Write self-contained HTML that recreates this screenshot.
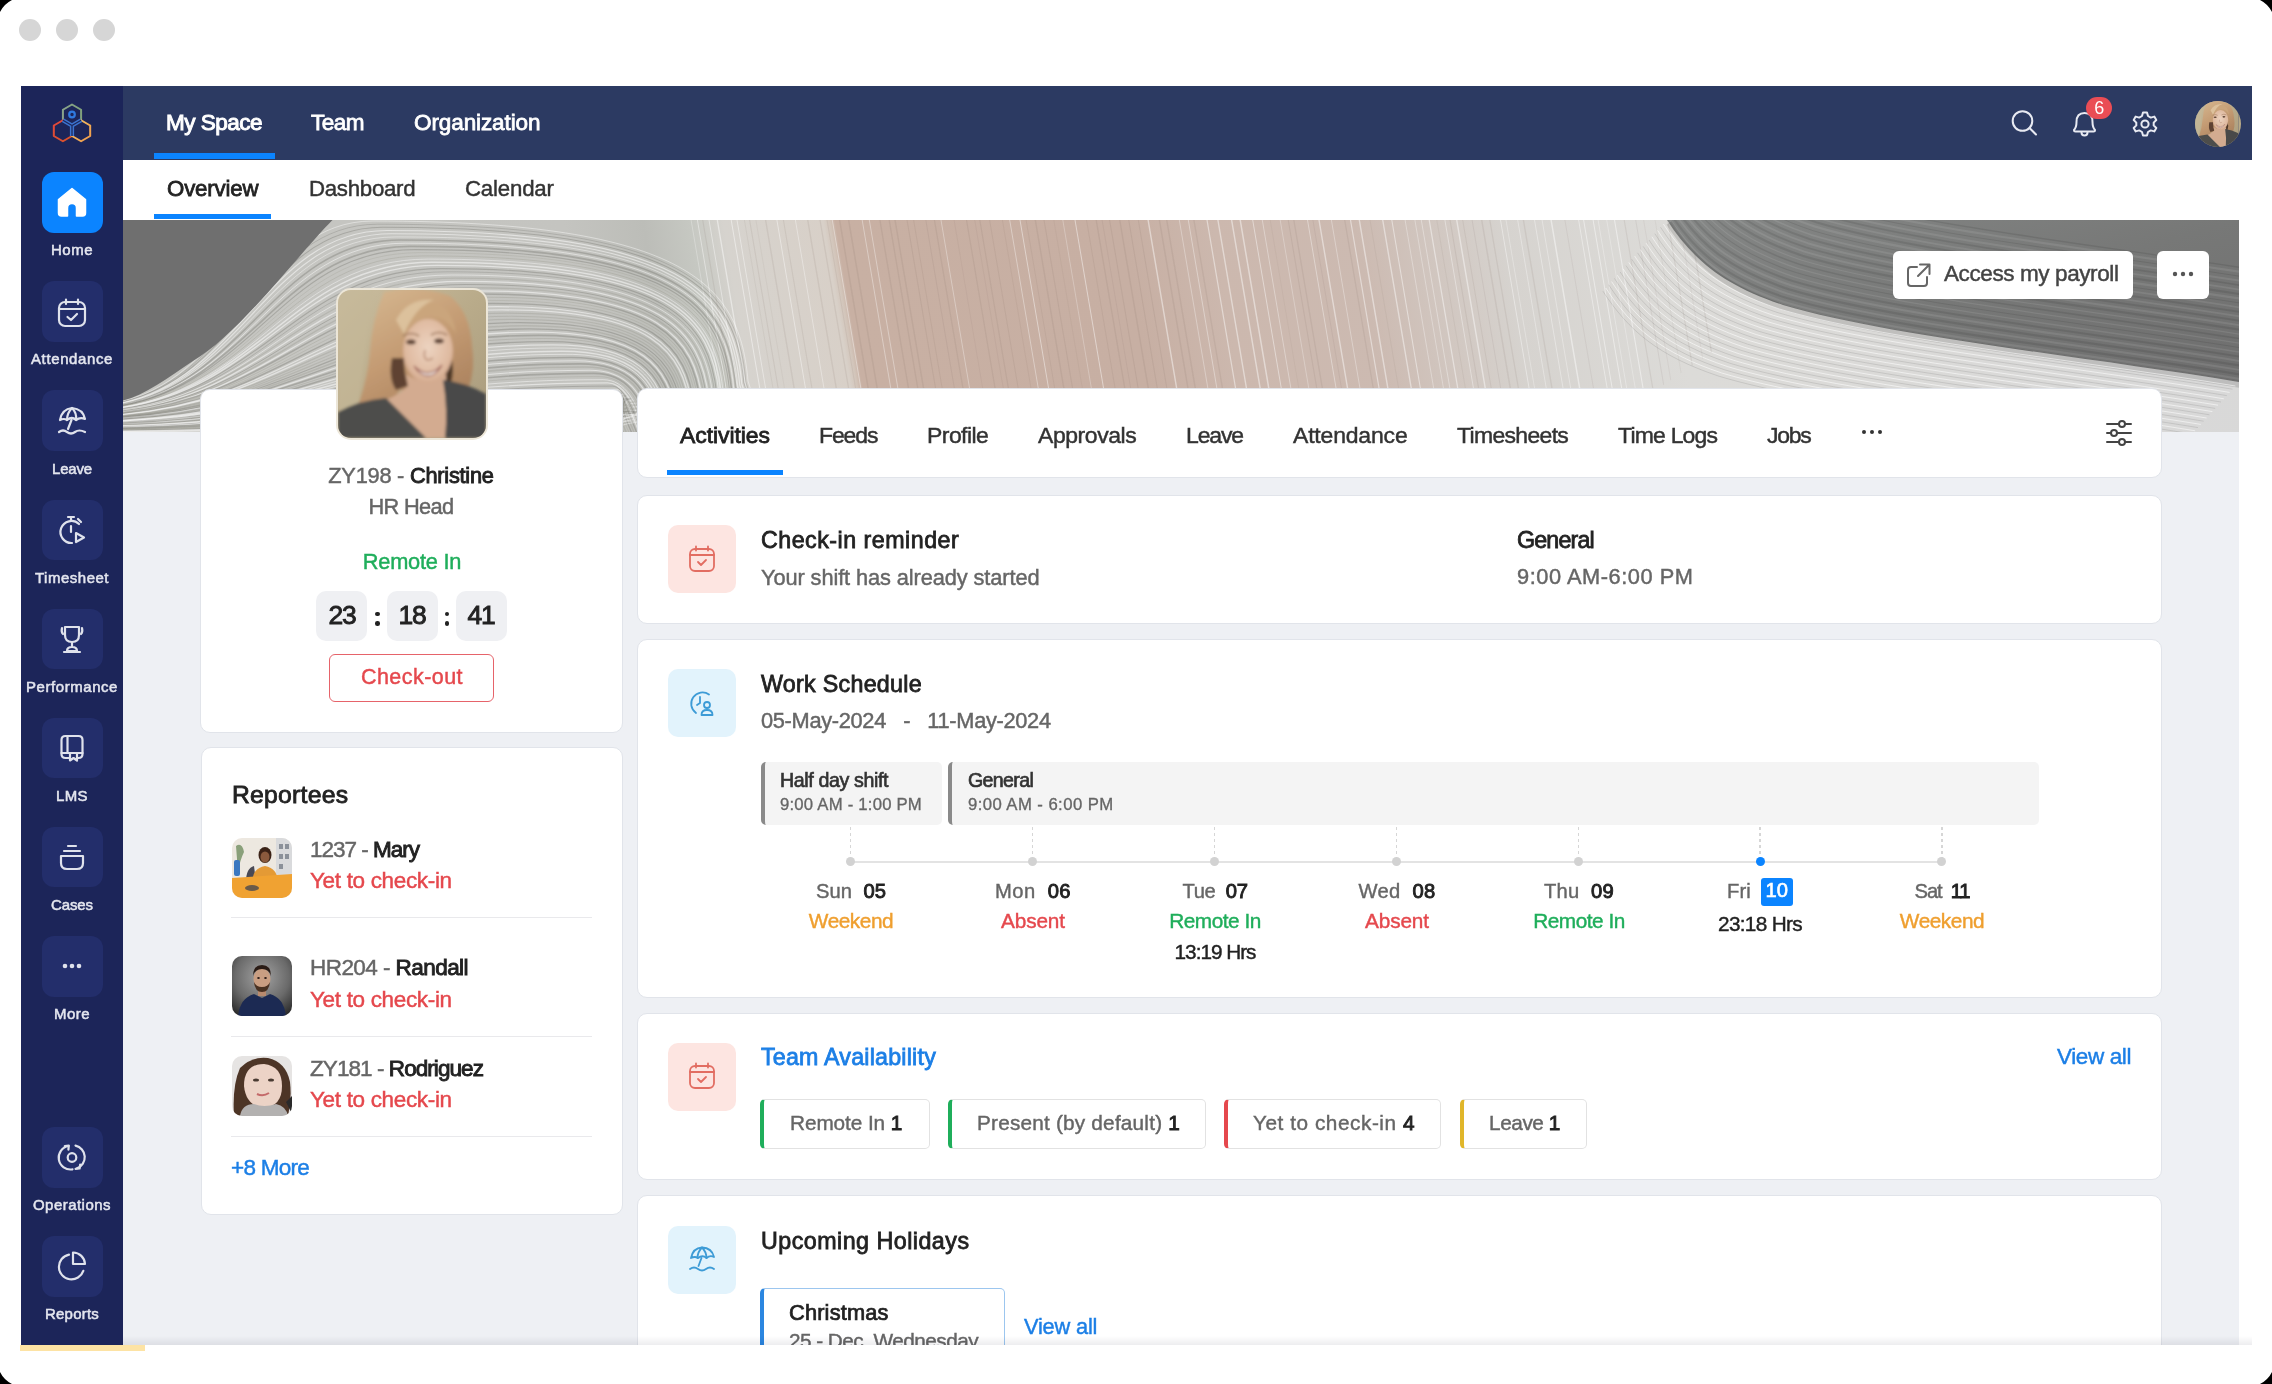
<!DOCTYPE html><html><head><meta charset="utf-8"><style>
html,body{margin:0;padding:0;}
body{width:2272px;height:1384px;overflow:hidden;background:#000;font-family:"Liberation Sans", sans-serif;}
.win{position:absolute;left:0;top:0;width:2272px;height:1384px;background:#fff;overflow:hidden;}
.t{position:absolute;white-space:nowrap;line-height:1;will-change:transform;}
.t b{font-weight:400;-webkit-text-stroke:0.9px #222;}
.card{position:absolute;background:#fff;border:1px solid #e1e4ea;border-radius:10px;box-sizing:border-box;}
</style></head><body><div class="win">
<div style="position:absolute;left:19px;top:19px;width:22px;height:22px;background:#d6d6d6;border-radius:50%;"></div>
<div style="position:absolute;left:56px;top:19px;width:22px;height:22px;background:#d6d6d6;border-radius:50%;"></div>
<div style="position:absolute;left:93px;top:19px;width:22px;height:22px;background:#d6d6d6;border-radius:50%;"></div>
<div style="position:absolute;left:21px;top:86px;width:102px;height:1259px;background:#1c2559;"></div>
<div style="position:absolute;left:123px;top:86px;width:2129px;height:73.5px;background:#2c3a62;"></div>
<div style="position:absolute;left:154px;top:153.2px;width:120.5px;height:6px;background:#0b84ff;"></div>
<div style="position:absolute;left:123px;top:159.5px;width:2116px;height:61px;background:#fff;"></div>
<div style="position:absolute;left:154px;top:214.2px;width:117px;height:4.8px;background:#0b84ff;"></div>
<div style="position:absolute;left:123px;top:432px;width:2116px;height:913px;background:#eef0f4;"></div>
<svg style="position:absolute;left:123px;top:220px;" width="2116" height="212" viewBox="0 0 2116 212">
    <defs>
      <linearGradient id="bg1" gradientUnits="userSpaceOnUse" x1="0" y1="0" x2="2116" y2="-349"><stop offset="0.0000" stop-color="#c6c6c2"/><stop offset="0.2024" stop-color="#c4c4c0"/><stop offset="0.2392" stop-color="#bcbdb8"/><stop offset="0.2609" stop-color="#c6c8c2"/><stop offset="0.2760" stop-color="#d6d3ce"/><stop offset="0.3221" stop-color="#d8d0c8"/><stop offset="0.3253" stop-color="#d2c4b9"/><stop offset="0.3276" stop-color="#c8b0a3"/><stop offset="0.4601" stop-color="#c7afa3"/><stop offset="0.5015" stop-color="#ccb8ae"/><stop offset="0.5664" stop-color="#ccbab1"/><stop offset="0.6349" stop-color="#d6d3cf"/><stop offset="0.7085" stop-color="#dcdbd8"/><stop offset="0.9735" stop-color="#d8d8d8"/></linearGradient>
      <linearGradient id="dk" x1="0" y1="0" x2="1" y2="1">
        <stop offset="0" stop-color="#858786"/><stop offset="0.5" stop-color="#777877"/><stop offset="1" stop-color="#6e6e6e"/>
      </linearGradient>
      <clipPath id="bclip"><rect width="2116" height="212"/></clipPath>
      <clipPath id="slclip"><path d="M560 0 H1544 C1570 40 1600 65 1660 85 L1470 212 H600 Z"/></clipPath>
    </defs>
    <g clip-path="url(#bclip)">
    <rect width="2116" height="212" fill="url(#bg1)"/>
    <g clip-path="url(#slclip)"><path d="M568.1 0 L604.1 212" stroke="rgba(255,255,255,0.45)" stroke-width="0.60" fill="none"/><path d="M574.4 0 L610.4 212" stroke="rgba(255,255,255,0.45)" stroke-width="0.93" fill="none"/><path d="M579.7 0 L615.7 212" stroke="rgba(110,90,80,0.10)" stroke-width="1.15" fill="none"/><path d="M586.0 0 L622.0 212" stroke="rgba(255,255,255,0.45)" stroke-width="0.91" fill="none"/><path d="M594.3 0 L630.3 212" stroke="rgba(255,255,255,0.45)" stroke-width="1.36" fill="none"/><path d="M608.2 0 L644.2 212" stroke="rgba(255,255,255,0.45)" stroke-width="1.04" fill="none"/><path d="M614.0 0 L650.0 212" stroke="rgba(255,255,255,0.45)" stroke-width="0.91" fill="none"/><path d="M621.4 0 L657.4 212" stroke="rgba(110,90,80,0.10)" stroke-width="0.75" fill="none"/><path d="M626.6 0 L662.6 212" stroke="rgba(110,90,80,0.10)" stroke-width="1.08" fill="none"/><path d="M632.9 0 L668.9 212" stroke="rgba(110,90,80,0.10)" stroke-width="0.62" fill="none"/><path d="M642.6 0 L678.6 212" stroke="rgba(110,90,80,0.10)" stroke-width="1.38" fill="none"/><path d="M653.9 0 L689.9 212" stroke="rgba(255,255,255,0.45)" stroke-width="0.93" fill="none"/><path d="M660.4 0 L696.4 212" stroke="rgba(110,90,80,0.10)" stroke-width="1.08" fill="none"/><path d="M672.4 0 L708.4 212" stroke="rgba(255,255,255,0.45)" stroke-width="0.80" fill="none"/><path d="M684.7 0 L720.7 212" stroke="rgba(110,90,80,0.10)" stroke-width="1.37" fill="none"/><path d="M697.0 0 L733.0 212" stroke="rgba(110,90,80,0.10)" stroke-width="1.27" fill="none"/><path d="M704.0 0 L740.0 212" stroke="rgba(110,90,80,0.10)" stroke-width="0.92" fill="none"/><path d="M709.3 0 L745.3 212" stroke="rgba(255,255,255,0.45)" stroke-width="0.85" fill="none"/><path d="M716.6 0 L752.6 212" stroke="rgba(110,90,80,0.10)" stroke-width="1.46" fill="none"/><path d="M725.6 0 L761.6 212" stroke="rgba(110,90,80,0.10)" stroke-width="1.49" fill="none"/><path d="M739.2 0 L775.2 212" stroke="rgba(255,255,255,0.45)" stroke-width="0.80" fill="none"/><path d="M746.3 0 L782.3 212" stroke="rgba(255,255,255,0.45)" stroke-width="0.78" fill="none"/><path d="M756.9 0 L792.9 212" stroke="rgba(110,90,80,0.10)" stroke-width="1.36" fill="none"/><path d="M766.2 0 L802.2 212" stroke="rgba(110,90,80,0.10)" stroke-width="1.32" fill="none"/><path d="M772.0 0 L808.0 212" stroke="rgba(110,90,80,0.10)" stroke-width="1.42" fill="none"/><path d="M784.0 0 L820.0 212" stroke="rgba(110,90,80,0.10)" stroke-width="1.03" fill="none"/><path d="M790.6 0 L826.6 212" stroke="rgba(110,90,80,0.10)" stroke-width="0.90" fill="none"/><path d="M802.8 0 L838.8 212" stroke="rgba(110,90,80,0.10)" stroke-width="0.96" fill="none"/><path d="M811.4 0 L847.4 212" stroke="rgba(110,90,80,0.10)" stroke-width="1.25" fill="none"/><path d="M818.0 0 L854.0 212" stroke="rgba(255,255,255,0.45)" stroke-width="0.74" fill="none"/><path d="M831.1 0 L867.1 212" stroke="rgba(110,90,80,0.10)" stroke-width="0.73" fill="none"/><path d="M843.5 0 L879.5 212" stroke="rgba(110,90,80,0.10)" stroke-width="1.19" fill="none"/><path d="M851.7 0 L887.7 212" stroke="rgba(110,90,80,0.10)" stroke-width="0.72" fill="none"/><path d="M856.8 0 L892.8 212" stroke="rgba(110,90,80,0.10)" stroke-width="1.18" fill="none"/><path d="M866.6 0 L902.6 212" stroke="rgba(110,90,80,0.10)" stroke-width="0.99" fill="none"/><path d="M879.4 0 L915.4 212" stroke="rgba(110,90,80,0.10)" stroke-width="0.79" fill="none"/><path d="M886.7 0 L922.7 212" stroke="rgba(255,255,255,0.45)" stroke-width="0.82" fill="none"/><path d="M897.0 0 L933.0 212" stroke="rgba(255,255,255,0.45)" stroke-width="0.98" fill="none"/><path d="M903.1 0 L939.1 212" stroke="rgba(110,90,80,0.10)" stroke-width="0.92" fill="none"/><path d="M912.3 0 L948.3 212" stroke="rgba(110,90,80,0.10)" stroke-width="1.41" fill="none"/><path d="M921.0 0 L957.0 212" stroke="rgba(110,90,80,0.10)" stroke-width="1.05" fill="none"/><path d="M930.8 0 L966.8 212" stroke="rgba(110,90,80,0.10)" stroke-width="0.62" fill="none"/><path d="M939.8 0 L975.8 212" stroke="rgba(255,255,255,0.45)" stroke-width="0.60" fill="none"/><path d="M952.0 0 L988.0 212" stroke="rgba(255,255,255,0.45)" stroke-width="1.03" fill="none"/><path d="M963.5 0 L999.5 212" stroke="rgba(110,90,80,0.10)" stroke-width="0.89" fill="none"/><path d="M973.2 0 L1009.2 212" stroke="rgba(110,90,80,0.10)" stroke-width="1.31" fill="none"/><path d="M979.1 0 L1015.1 212" stroke="rgba(110,90,80,0.10)" stroke-width="0.82" fill="none"/><path d="M986.6 0 L1022.6 212" stroke="rgba(110,90,80,0.10)" stroke-width="1.06" fill="none"/><path d="M996.7 0 L1032.7 212" stroke="rgba(110,90,80,0.10)" stroke-width="1.42" fill="none"/><path d="M1005.7 0 L1041.7 212" stroke="rgba(110,90,80,0.10)" stroke-width="1.05" fill="none"/><path d="M1015.3 0 L1051.3 212" stroke="rgba(110,90,80,0.10)" stroke-width="1.01" fill="none"/><path d="M1025.1 0 L1061.1 212" stroke="rgba(255,255,255,0.45)" stroke-width="1.45" fill="none"/><path d="M1036.4 0 L1072.4 212" stroke="rgba(110,90,80,0.10)" stroke-width="1.45" fill="none"/><path d="M1043.7 0 L1079.7 212" stroke="rgba(110,90,80,0.10)" stroke-width="1.45" fill="none"/><path d="M1056.3 0 L1092.3 212" stroke="rgba(255,255,255,0.45)" stroke-width="0.71" fill="none"/><path d="M1065.3 0 L1101.3 212" stroke="rgba(255,255,255,0.45)" stroke-width="0.82" fill="none"/><path d="M1070.9 0 L1106.9 212" stroke="rgba(110,90,80,0.10)" stroke-width="1.31" fill="none"/><path d="M1084.0 0 L1120.0 212" stroke="rgba(255,255,255,0.45)" stroke-width="1.24" fill="none"/><path d="M1094.9 0 L1130.9 212" stroke="rgba(255,255,255,0.45)" stroke-width="1.39" fill="none"/><path d="M1108.6 0 L1144.6 212" stroke="rgba(255,255,255,0.45)" stroke-width="1.46" fill="none"/><path d="M1117.2 0 L1153.2 212" stroke="rgba(255,255,255,0.45)" stroke-width="1.49" fill="none"/><path d="M1129.7 0 L1165.7 212" stroke="rgba(255,255,255,0.45)" stroke-width="0.99" fill="none"/><path d="M1139.3 0 L1175.3 212" stroke="rgba(255,255,255,0.45)" stroke-width="0.78" fill="none"/><path d="M1147.2 0 L1183.2 212" stroke="rgba(110,90,80,0.10)" stroke-width="0.62" fill="none"/><path d="M1157.2 0 L1193.2 212" stroke="rgba(255,255,255,0.45)" stroke-width="0.62" fill="none"/><path d="M1165.2 0 L1201.2 212" stroke="rgba(110,90,80,0.10)" stroke-width="1.06" fill="none"/><path d="M1170.8 0 L1206.8 212" stroke="rgba(110,90,80,0.10)" stroke-width="1.31" fill="none"/><path d="M1184.5 0 L1220.5 212" stroke="rgba(255,255,255,0.45)" stroke-width="0.84" fill="none"/><path d="M1189.9 0 L1225.9 212" stroke="rgba(110,90,80,0.10)" stroke-width="0.84" fill="none"/><path d="M1196.0 0 L1232.0 212" stroke="rgba(255,255,255,0.45)" stroke-width="1.42" fill="none"/><path d="M1208.4 0 L1244.4 212" stroke="rgba(255,255,255,0.45)" stroke-width="0.73" fill="none"/><path d="M1221.7 0 L1257.7 212" stroke="rgba(110,90,80,0.10)" stroke-width="1.23" fill="none"/><path d="M1227.5 0 L1263.5 212" stroke="rgba(255,255,255,0.45)" stroke-width="1.22" fill="none"/><path d="M1236.3 0 L1272.3 212" stroke="rgba(255,255,255,0.45)" stroke-width="1.44" fill="none"/><path d="M1247.0 0 L1283.0 212" stroke="rgba(110,90,80,0.10)" stroke-width="0.68" fill="none"/><path d="M1259.7 0 L1295.7 212" stroke="rgba(255,255,255,0.45)" stroke-width="1.38" fill="none"/><path d="M1268.8 0 L1304.8 212" stroke="rgba(255,255,255,0.45)" stroke-width="1.10" fill="none"/><path d="M1282.1 0 L1318.1 212" stroke="rgba(255,255,255,0.45)" stroke-width="0.72" fill="none"/><path d="M1291.9 0 L1327.9 212" stroke="rgba(255,255,255,0.45)" stroke-width="0.70" fill="none"/><path d="M1298.3 0 L1334.3 212" stroke="rgba(255,255,255,0.45)" stroke-width="0.78" fill="none"/><path d="M1306.2 0 L1342.2 212" stroke="rgba(255,255,255,0.45)" stroke-width="1.28" fill="none"/><path d="M1313.8 0 L1349.8 212" stroke="rgba(110,90,80,0.10)" stroke-width="0.76" fill="none"/><path d="M1321.9 0 L1357.9 212" stroke="rgba(255,255,255,0.45)" stroke-width="0.83" fill="none"/><path d="M1327.0 0 L1363.0 212" stroke="rgba(110,90,80,0.10)" stroke-width="1.10" fill="none"/><path d="M1333.7 0 L1369.7 212" stroke="rgba(255,255,255,0.45)" stroke-width="1.44" fill="none"/><path d="M1339.7 0 L1375.7 212" stroke="rgba(110,90,80,0.10)" stroke-width="0.99" fill="none"/><path d="M1349.1 0 L1385.1 212" stroke="rgba(110,90,80,0.10)" stroke-width="0.95" fill="none"/><path d="M1358.7 0 L1394.7 212" stroke="rgba(110,90,80,0.10)" stroke-width="1.48" fill="none"/><path d="M1366.8 0 L1402.8 212" stroke="rgba(110,90,80,0.10)" stroke-width="1.24" fill="none"/><path d="M1377.5 0 L1413.5 212" stroke="rgba(255,255,255,0.45)" stroke-width="0.91" fill="none"/><path d="M1383.0 0 L1419.0 212" stroke="rgba(255,255,255,0.45)" stroke-width="0.66" fill="none"/><path d="M1394.7 0 L1430.7 212" stroke="rgba(255,255,255,0.45)" stroke-width="0.75" fill="none"/><path d="M1400.4 0 L1436.4 212" stroke="rgba(110,90,80,0.10)" stroke-width="1.38" fill="none"/><path d="M1411.5 0 L1447.5 212" stroke="rgba(255,255,255,0.45)" stroke-width="0.82" fill="none"/><path d="M1419.1 0 L1455.1 212" stroke="rgba(255,255,255,0.45)" stroke-width="0.74" fill="none"/><path d="M1428.1 0 L1464.1 212" stroke="rgba(255,255,255,0.45)" stroke-width="1.47" fill="none"/><path d="M1441.9 0 L1477.9 212" stroke="rgba(110,90,80,0.10)" stroke-width="0.82" fill="none"/><path d="M1455.6 0 L1491.6 212" stroke="rgba(255,255,255,0.45)" stroke-width="0.92" fill="none"/><path d="M1460.6 0 L1496.6 212" stroke="rgba(255,255,255,0.45)" stroke-width="1.03" fill="none"/><path d="M1470.1 0 L1506.1 212" stroke="rgba(255,255,255,0.45)" stroke-width="1.05" fill="none"/><path d="M1475.1 0 L1511.1 212" stroke="rgba(255,255,255,0.45)" stroke-width="0.68" fill="none"/><path d="M1483.7 0 L1519.7 212" stroke="rgba(255,255,255,0.45)" stroke-width="0.62" fill="none"/><path d="M1491.5 0 L1527.5 212" stroke="rgba(255,255,255,0.45)" stroke-width="1.13" fill="none"/><path d="M1501.2 0 L1537.2 212" stroke="rgba(110,90,80,0.10)" stroke-width="1.19" fill="none"/><path d="M1512.7 0 L1548.7 212" stroke="rgba(110,90,80,0.10)" stroke-width="0.95" fill="none"/><path d="M1520.6 0 L1556.6 212" stroke="rgba(110,90,80,0.10)" stroke-width="0.73" fill="none"/><path d="M1532.1 0 L1568.1 212" stroke="rgba(110,90,80,0.10)" stroke-width="0.64" fill="none"/><path d="M1544.6 0 L1580.6 212" stroke="rgba(110,90,80,0.10)" stroke-width="1.16" fill="none"/><path d="M1556.2 0 L1592.2 212" stroke="rgba(110,90,80,0.10)" stroke-width="0.73" fill="none"/><path d="M1566.0 0 L1602.0 212" stroke="rgba(110,90,80,0.10)" stroke-width="1.35" fill="none"/></g>
    <path d="M0.0 181.0 C112.5 154.0 137.5 1.0 250.0 1.0 C570.0 1.0 617.0 68.0 625.0 161.0 L650.0 240.0" stroke="rgba(255,255,255,0.5)" stroke-width="0.85" fill="none"/><path d="M0.0 181.5 C114.6 154.9 140.0 4.2 254.6 4.2 C568.7 4.2 614.9 70.3 622.9 162.0 L647.9 240.0" stroke="rgba(80,80,75,0.26)" stroke-width="0.77" fill="none"/><path d="M0.0 182.0 C116.6 155.8 142.6 7.3 259.2 7.3 C567.3 7.3 612.9 72.6 620.9 162.9 L645.9 240.0" stroke="rgba(80,80,75,0.26)" stroke-width="1.07" fill="none"/><path d="M0.0 182.5 C118.7 156.7 145.1 10.5 263.8 10.5 C566.0 10.5 610.8 74.9 618.8 163.9 L643.8 240.0" stroke="rgba(255,255,255,0.5)" stroke-width="1.21" fill="none"/><path d="M0.0 183.0 C120.8 157.6 147.6 13.7 268.4 13.7 C564.6 13.7 608.7 77.2 616.7 164.8 L641.7 240.0" stroke="rgba(255,255,255,0.5)" stroke-width="1.13" fill="none"/><path d="M0.0 183.5 C122.9 158.5 150.2 16.9 273.0 16.9 C563.3 16.9 606.7 79.5 614.7 165.8 L639.7 240.0" stroke="rgba(255,255,255,0.5)" stroke-width="0.79" fill="none"/><path d="M0.0 184.0 C124.9 159.4 152.7 20.0 277.6 20.0 C561.9 20.0 604.6 81.8 612.6 166.7 L637.6 240.0" stroke="rgba(80,80,75,0.26)" stroke-width="1.53" fill="none"/><path d="M0.0 184.4 C127.0 160.3 155.2 23.2 282.2 23.2 C560.6 23.2 602.6 84.1 610.6 167.7 L635.6 240.0" stroke="rgba(255,255,255,0.5)" stroke-width="0.92" fill="none"/><path d="M0.0 184.9 C129.1 161.2 157.8 26.4 286.8 26.4 C559.2 26.4 600.5 86.4 608.5 168.6 L633.5 240.0" stroke="rgba(80,80,75,0.26)" stroke-width="1.65" fill="none"/><path d="M0.0 185.4 C131.1 162.0 160.3 29.6 291.4 29.6 C557.9 29.6 598.4 88.7 606.4 169.6 L631.4 240.0" stroke="rgba(80,80,75,0.26)" stroke-width="1.10" fill="none"/><path d="M0.0 185.9 C133.2 162.9 162.8 32.7 296.0 32.7 C556.5 32.7 596.4 91.0 604.4 170.5 L629.4 240.0" stroke="rgba(150,150,140,0.32)" stroke-width="0.75" fill="none"/><path d="M0.0 186.4 C135.3 163.8 165.3 35.9 300.6 35.9 C555.2 35.9 594.3 93.3 602.3 171.5 L627.3 240.0" stroke="rgba(150,150,140,0.32)" stroke-width="0.99" fill="none"/><path d="M0.0 186.9 C137.4 164.7 167.9 39.1 305.2 39.1 C553.8 39.1 592.2 95.6 600.2 172.4 L625.2 240.0" stroke="rgba(255,255,255,0.5)" stroke-width="0.82" fill="none"/><path d="M0.0 187.4 C139.4 165.6 170.4 42.3 309.8 42.3 C552.5 42.3 590.2 97.9 598.2 173.4 L623.2 240.0" stroke="rgba(255,255,255,0.5)" stroke-width="1.52" fill="none"/><path d="M0.0 187.9 C141.5 166.5 172.9 45.4 314.4 45.4 C551.1 45.4 588.1 100.2 596.1 174.3 L621.1 240.0" stroke="rgba(255,255,255,0.5)" stroke-width="1.28" fill="none"/><path d="M0.0 188.4 C143.6 167.4 175.5 48.6 319.0 48.6 C549.8 48.6 586.0 102.5 594.0 175.3 L619.0 240.0" stroke="rgba(80,80,75,0.26)" stroke-width="1.07" fill="none"/><path d="M0.0 188.9 C145.6 168.3 178.0 51.8 323.7 51.8 C548.4 51.8 584.0 104.8 592.0 176.2 L617.0 240.0" stroke="rgba(80,80,75,0.26)" stroke-width="0.76" fill="none"/><path d="M0.0 189.4 C147.7 169.2 180.5 55.0 328.3 55.0 C547.1 55.0 581.9 107.1 589.9 177.2 L614.9 240.0" stroke="rgba(255,255,255,0.5)" stroke-width="0.91" fill="none"/><path d="M0.0 189.9 C149.8 170.1 183.1 58.1 332.9 58.1 C545.7 58.1 579.9 109.4 587.9 178.1 L612.9 240.0" stroke="rgba(150,150,140,0.32)" stroke-width="1.13" fill="none"/><path d="M0.0 190.3 C151.9 171.0 185.6 61.3 337.5 61.3 C544.4 61.3 577.8 111.7 585.8 179.1 L610.8 240.0" stroke="rgba(255,255,255,0.5)" stroke-width="1.29" fill="none"/><path d="M0.0 190.8 C153.9 171.9 188.1 64.5 342.1 64.5 C543.0 64.5 575.7 114.0 583.7 180.0 L608.7 240.0" stroke="rgba(80,80,75,0.26)" stroke-width="1.00" fill="none"/><path d="M0.0 191.3 C156.0 172.8 190.7 67.7 346.7 67.7 C541.7 67.7 573.7 116.3 581.7 181.0 L606.7 240.0" stroke="rgba(150,150,140,0.32)" stroke-width="1.40" fill="none"/><path d="M0.0 191.8 C158.1 173.7 193.2 70.8 351.3 70.8 C540.3 70.8 571.6 118.6 579.6 182.0 L604.6 240.0" stroke="rgba(255,255,255,0.5)" stroke-width="1.27" fill="none"/><path d="M0.0 192.3 C160.1 174.6 195.7 74.0 355.9 74.0 C539.0 74.0 569.5 120.9 577.5 182.9 L602.5 240.0" stroke="rgba(80,80,75,0.26)" stroke-width="1.58" fill="none"/><path d="M0.0 192.8 C162.2 175.5 198.3 77.2 360.5 77.2 C537.6 77.2 567.5 123.2 575.5 183.9 L600.5 240.0" stroke="rgba(150,150,140,0.32)" stroke-width="0.99" fill="none"/><path d="M0.0 193.3 C164.3 176.4 200.8 80.4 365.1 80.4 C536.3 80.4 565.4 125.5 573.4 184.8 L598.4 240.0" stroke="rgba(150,150,140,0.32)" stroke-width="0.82" fill="none"/><path d="M0.0 193.8 C166.4 177.3 203.3 83.5 369.7 83.5 C534.9 83.5 563.3 127.8 571.3 185.8 L596.3 240.0" stroke="rgba(80,80,75,0.26)" stroke-width="1.46" fill="none"/><path d="M0.0 194.3 C168.4 178.1 205.9 86.7 374.3 86.7 C533.6 86.7 561.3 130.1 569.3 186.7 L594.3 240.0" stroke="rgba(255,255,255,0.5)" stroke-width="1.19" fill="none"/><path d="M0.0 194.8 C170.5 179.0 208.4 89.9 378.9 89.9 C532.2 89.9 559.2 132.4 567.2 187.7 L592.2 240.0" stroke="rgba(255,255,255,0.5)" stroke-width="1.37" fill="none"/><path d="M0.0 195.3 C172.6 179.9 210.9 93.1 383.5 93.1 C530.9 93.1 557.2 134.7 565.2 188.6 L590.2 240.0" stroke="rgba(150,150,140,0.32)" stroke-width="1.27" fill="none"/><path d="M0.0 195.8 C174.6 180.8 213.5 96.2 388.1 96.2 C529.5 96.2 555.1 137.0 563.1 189.6 L588.1 240.0" stroke="rgba(150,150,140,0.32)" stroke-width="1.01" fill="none"/><path d="M0.0 196.3 C176.7 181.7 216.0 99.4 392.7 99.4 C528.2 99.4 553.0 139.3 561.0 190.5 L586.0 240.0" stroke="rgba(150,150,140,0.32)" stroke-width="1.29" fill="none"/><path d="M0.0 196.7 C178.8 182.6 218.5 102.6 397.3 102.6 C526.8 102.6 551.0 141.7 559.0 191.5 L584.0 240.0" stroke="rgba(80,80,75,0.26)" stroke-width="1.16" fill="none"/><path d="M0.0 197.2 C180.9 183.5 221.0 105.8 401.9 105.8 C525.5 105.8 548.9 144.0 556.9 192.4 L581.9 240.0" stroke="rgba(150,150,140,0.32)" stroke-width="1.64" fill="none"/><path d="M0.0 197.7 C182.9 184.4 223.6 108.9 406.5 108.9 C524.1 108.9 546.8 146.3 554.8 193.4 L579.8 240.0" stroke="rgba(80,80,75,0.26)" stroke-width="1.36" fill="none"/><path d="M0.0 198.2 C185.0 185.3 226.1 112.1 411.1 112.1 C522.8 112.1 544.8 148.6 552.8 194.3 L577.8 240.0" stroke="rgba(255,255,255,0.5)" stroke-width="1.40" fill="none"/><path d="M0.0 198.7 C187.1 186.2 228.6 115.3 415.7 115.3 C521.4 115.3 542.7 150.9 550.7 195.3 L575.7 240.0" stroke="rgba(80,80,75,0.26)" stroke-width="1.69" fill="none"/><path d="M0.0 199.2 C189.1 187.1 231.2 118.5 420.3 118.5 C520.1 118.5 540.7 153.2 548.7 196.2 L573.7 240.0" stroke="rgba(150,150,140,0.32)" stroke-width="0.98" fill="none"/><path d="M0.0 199.7 C191.2 188.0 233.7 121.6 424.9 121.6 C518.7 121.6 538.6 155.5 546.6 197.2 L571.6 240.0" stroke="rgba(80,80,75,0.26)" stroke-width="1.37" fill="none"/><path d="M0.0 200.2 C193.3 188.9 236.2 124.8 429.5 124.8 C517.4 124.8 536.5 157.8 544.5 198.1 L569.5 240.0" stroke="rgba(255,255,255,0.5)" stroke-width="1.16" fill="none"/><path d="M0.0 200.7 C195.4 189.8 238.8 128.0 434.1 128.0 C516.0 128.0 534.5 160.1 542.5 199.1 L567.5 240.0" stroke="rgba(255,255,255,0.5)" stroke-width="0.82" fill="none"/><path d="M0.0 201.2 C197.4 190.7 241.3 131.2 438.7 131.2 C514.7 131.2 532.4 162.4 540.4 200.0 L565.4 240.0" stroke="rgba(255,255,255,0.5)" stroke-width="1.47" fill="none"/><path d="M0.0 201.7 C199.5 191.6 243.8 134.3 443.3 134.3 C513.3 134.3 530.3 164.7 538.3 201.0 L563.3 240.0" stroke="rgba(255,255,255,0.5)" stroke-width="0.95" fill="none"/><path d="M0.0 202.2 C201.6 192.5 246.4 137.5 447.9 137.5 C512.0 137.5 528.3 167.0 536.3 202.0 L561.3 240.0" stroke="rgba(80,80,75,0.26)" stroke-width="1.57" fill="none"/><path d="M0.0 202.7 C203.6 193.4 248.9 140.7 452.5 140.7 C510.6 140.7 526.2 169.3 534.2 202.9 L559.2 240.0" stroke="rgba(255,255,255,0.5)" stroke-width="1.15" fill="none"/><path d="M0.0 203.1 C205.7 194.2 251.4 143.9 457.1 143.9 C509.3 143.9 524.1 171.6 532.1 203.9 L557.1 240.0" stroke="rgba(80,80,75,0.26)" stroke-width="1.58" fill="none"/><path d="M0.0 203.6 C207.8 195.1 254.0 147.0 461.7 147.0 C507.9 147.0 522.1 173.9 530.1 204.8 L555.1 240.0" stroke="rgba(150,150,140,0.32)" stroke-width="1.56" fill="none"/><path d="M0.0 204.1 C209.9 196.0 256.5 150.2 466.3 150.2 C506.6 150.2 520.0 176.2 528.0 205.8 L553.0 240.0" stroke="rgba(255,255,255,0.5)" stroke-width="1.12" fill="none"/><path d="M0.0 204.6 C211.9 196.9 259.0 153.4 471.0 153.4 C505.2 153.4 518.0 178.5 526.0 206.7 L551.0 240.0" stroke="rgba(80,80,75,0.26)" stroke-width="1.58" fill="none"/><path d="M0.0 205.1 C214.0 197.8 261.6 156.6 475.6 156.6 C503.9 156.6 515.9 180.8 523.9 207.7 L548.9 240.0" stroke="rgba(150,150,140,0.32)" stroke-width="0.85" fill="none"/><path d="M0.0 205.6 C216.1 198.7 264.1 159.7 480.2 159.7 C502.5 159.7 513.8 183.1 521.8 208.6 L546.8 240.0" stroke="rgba(255,255,255,0.5)" stroke-width="0.93" fill="none"/><path d="M0.0 206.1 C218.1 199.6 266.6 162.9 484.8 162.9 C501.2 162.9 511.8 185.4 519.8 209.6 L544.8 240.0" stroke="rgba(255,255,255,0.5)" stroke-width="1.18" fill="none"/><path d="M0.0 206.6 C220.2 200.5 269.2 166.1 489.4 166.1 C499.8 166.1 509.7 187.7 517.7 210.5 L542.7 240.0" stroke="rgba(80,80,75,0.26)" stroke-width="0.96" fill="none"/><path d="M0.0 207.1 C222.3 201.4 271.7 169.3 494.0 169.3 C498.5 169.3 507.6 190.0 515.6 211.5 L540.6 240.0" stroke="rgba(255,255,255,0.5)" stroke-width="1.12" fill="none"/><path d="M0.0 207.6 C224.4 202.3 274.2 172.4 498.6 172.4 C497.1 172.4 505.6 192.3 513.6 212.4 L538.6 240.0" stroke="rgba(80,80,75,0.26)" stroke-width="1.27" fill="none"/><path d="M0.0 208.1 C226.4 203.2 276.7 175.6 503.2 175.6 C495.8 175.6 503.5 194.6 511.5 213.4 L536.5 240.0" stroke="rgba(150,150,140,0.32)" stroke-width="1.39" fill="none"/><path d="M0.0 208.6 C228.5 204.1 279.3 178.8 507.8 178.8 C494.4 178.8 501.4 196.9 509.4 214.3 L534.4 240.0" stroke="rgba(80,80,75,0.26)" stroke-width="1.32" fill="none"/><path d="M0.0 209.0 C230.6 205.0 281.8 182.0 512.4 182.0 C493.1 182.0 499.4 199.2 507.4 215.3 L532.4 240.0" stroke="rgba(150,150,140,0.32)" stroke-width="0.75" fill="none"/><path d="M0.0 209.5 C232.6 205.9 284.3 185.1 517.0 185.1 C491.7 185.1 497.3 201.5 505.3 216.2 L530.3 240.0" stroke="rgba(150,150,140,0.32)" stroke-width="1.48" fill="none"/><path d="M0.0 210.0 C234.7 206.8 286.9 188.3 521.6 188.3 C490.4 188.3 495.3 203.8 503.3 217.2 L528.3 240.0" stroke="rgba(150,150,140,0.32)" stroke-width="1.50" fill="none"/><path d="M0.0 210.5 C236.8 207.7 289.4 191.5 526.2 191.5 C489.0 191.5 493.2 206.1 501.2 218.1 L526.2 240.0" stroke="rgba(80,80,75,0.26)" stroke-width="1.10" fill="none"/><path d="M0.0 211.0 C238.9 208.6 291.9 194.7 530.8 194.7 C487.7 194.7 491.1 208.4 499.1 219.1 L524.1 240.0" stroke="rgba(255,255,255,0.5)" stroke-width="1.33" fill="none"/><path d="M0.0 211.5 C240.9 209.5 294.5 197.8 535.4 197.8 C486.3 197.8 489.1 210.7 497.1 220.0 L522.1 240.0" stroke="rgba(255,255,255,0.5)" stroke-width="0.77" fill="none"/><path d="M0.0 212.0 C243.0 210.3 297.0 201.0 540.0 201.0 C485.0 201.0 487.0 213.0 495.0 221.0 L520.0 240.0" stroke="rgba(255,255,255,0.5)" stroke-width="0.86" fill="none"/>
    <path d="M0 0 L209.5 0 C175 35 115 115 70 141 C45 158 22 175 0 180.5 Z" fill="#6f6f6f"/>
    <path d="M1544 0 C1570 40 1600 65 1660 85 C1760 115 1950 135 2116 162 L2116 0 Z" fill="url(#dk)"/>
    <path d="M1544 0 C1570 40 1600 65 1660 85 C1760 115 1950 135 2116 162" transform="translate(1.2,-3.0)" stroke="rgba(255,255,255,0.09)" stroke-width="2.21" fill="none"/><path d="M1544 0 C1570 40 1600 65 1660 85 C1760 115 1950 135 2116 162" transform="translate(2.9,-7.2)" stroke="rgba(0,0,0,0.09)" stroke-width="2.24" fill="none"/><path d="M1544 0 C1570 40 1600 65 1660 85 C1760 115 1950 135 2116 162" transform="translate(4.6,-11.4)" stroke="rgba(255,255,255,0.09)" stroke-width="1.88" fill="none"/><path d="M1544 0 C1570 40 1600 65 1660 85 C1760 115 1950 135 2116 162" transform="translate(6.2,-15.6)" stroke="rgba(0,0,0,0.09)" stroke-width="2.34" fill="none"/><path d="M1544 0 C1570 40 1600 65 1660 85 C1760 115 1950 135 2116 162" transform="translate(7.9,-19.8)" stroke="rgba(255,255,255,0.09)" stroke-width="2.02" fill="none"/><path d="M1544 0 C1570 40 1600 65 1660 85 C1760 115 1950 135 2116 162" transform="translate(9.6,-24.0)" stroke="rgba(0,0,0,0.09)" stroke-width="2.04" fill="none"/><path d="M1544 0 C1570 40 1600 65 1660 85 C1760 115 1950 135 2116 162" transform="translate(11.3,-28.2)" stroke="rgba(255,255,255,0.09)" stroke-width="1.34" fill="none"/><path d="M1544 0 C1570 40 1600 65 1660 85 C1760 115 1950 135 2116 162" transform="translate(13.0,-32.4)" stroke="rgba(0,0,0,0.09)" stroke-width="1.05" fill="none"/><path d="M1544 0 C1570 40 1600 65 1660 85 C1760 115 1950 135 2116 162" transform="translate(14.6,-36.6)" stroke="rgba(255,255,255,0.09)" stroke-width="1.20" fill="none"/><path d="M1544 0 C1570 40 1600 65 1660 85 C1760 115 1950 135 2116 162" transform="translate(16.3,-40.8)" stroke="rgba(0,0,0,0.09)" stroke-width="1.54" fill="none"/><path d="M1544 0 C1570 40 1600 65 1660 85 C1760 115 1950 135 2116 162" transform="translate(18.0,-45.0)" stroke="rgba(255,255,255,0.09)" stroke-width="1.16" fill="none"/><path d="M1544 0 C1570 40 1600 65 1660 85 C1760 115 1950 135 2116 162" transform="translate(19.7,-49.2)" stroke="rgba(0,0,0,0.09)" stroke-width="2.25" fill="none"/><path d="M1544 0 C1570 40 1600 65 1660 85 C1760 115 1950 135 2116 162" transform="translate(21.4,-53.4)" stroke="rgba(255,255,255,0.09)" stroke-width="1.84" fill="none"/><path d="M1544 0 C1570 40 1600 65 1660 85 C1760 115 1950 135 2116 162" transform="translate(23.0,-57.6)" stroke="rgba(0,0,0,0.09)" stroke-width="1.94" fill="none"/><path d="M1544 0 C1570 40 1600 65 1660 85 C1760 115 1950 135 2116 162" transform="translate(24.7,-61.8)" stroke="rgba(255,255,255,0.09)" stroke-width="1.94" fill="none"/><path d="M1544 0 C1570 40 1600 65 1660 85 C1760 115 1950 135 2116 162" transform="translate(26.4,-66.0)" stroke="rgba(0,0,0,0.09)" stroke-width="2.02" fill="none"/><path d="M1544 0 C1570 40 1600 65 1660 85 C1760 115 1950 135 2116 162" transform="translate(28.1,-70.2)" stroke="rgba(255,255,255,0.09)" stroke-width="1.73" fill="none"/><path d="M1544 0 C1570 40 1600 65 1660 85 C1760 115 1950 135 2116 162" transform="translate(29.8,-74.4)" stroke="rgba(0,0,0,0.09)" stroke-width="1.00" fill="none"/><path d="M1544 0 C1570 40 1600 65 1660 85 C1760 115 1950 135 2116 162" transform="translate(31.4,-78.6)" stroke="rgba(255,255,255,0.09)" stroke-width="2.20" fill="none"/><path d="M1544 0 C1570 40 1600 65 1660 85 C1760 115 1950 135 2116 162" transform="translate(33.1,-82.8)" stroke="rgba(0,0,0,0.09)" stroke-width="2.12" fill="none"/><path d="M1544 0 C1570 40 1600 65 1660 85 C1760 115 1950 135 2116 162" transform="translate(34.8,-87.0)" stroke="rgba(255,255,255,0.09)" stroke-width="1.75" fill="none"/><path d="M1544 0 C1570 40 1600 65 1660 85 C1760 115 1950 135 2116 162" transform="translate(36.5,-91.2)" stroke="rgba(0,0,0,0.09)" stroke-width="1.80" fill="none"/><path d="M1544 0 C1570 40 1600 65 1660 85 C1760 115 1950 135 2116 162" transform="translate(38.2,-95.4)" stroke="rgba(255,255,255,0.09)" stroke-width="1.99" fill="none"/><path d="M1544 0 C1570 40 1600 65 1660 85 C1760 115 1950 135 2116 162" transform="translate(39.8,-99.6)" stroke="rgba(0,0,0,0.09)" stroke-width="1.10" fill="none"/><path d="M1544 0 C1570 40 1600 65 1660 85 C1760 115 1950 135 2116 162" transform="translate(41.5,-103.8)" stroke="rgba(255,255,255,0.09)" stroke-width="2.11" fill="none"/><path d="M1544 0 C1570 40 1600 65 1660 85 C1760 115 1950 135 2116 162" transform="translate(43.2,-108.0)" stroke="rgba(0,0,0,0.09)" stroke-width="1.38" fill="none"/><path d="M1544 0 C1570 40 1600 65 1660 85 C1760 115 1950 135 2116 162" transform="translate(2,3)" stroke="rgba(0,0,0,0.12)" stroke-width="6" fill="none"/><path d="M1544 0 C1570 40 1600 65 1660 85 C1760 115 1950 135 2116 162" transform="translate(-3.6,4.0)" stroke="rgba(255,255,255,0.55)" stroke-width="1" fill="none"/><path d="M1544 0 C1570 40 1600 65 1660 85 C1760 115 1950 135 2116 162" transform="translate(-6.5,7.2)" stroke="rgba(90,90,90,0.16)" stroke-width="1" fill="none"/><path d="M1544 0 C1570 40 1600 65 1660 85 C1760 115 1950 135 2116 162" transform="translate(-9.4,10.4)" stroke="rgba(255,255,255,0.55)" stroke-width="1" fill="none"/><path d="M1544 0 C1570 40 1600 65 1660 85 C1760 115 1950 135 2116 162" transform="translate(-12.2,13.6)" stroke="rgba(90,90,90,0.16)" stroke-width="1" fill="none"/><path d="M1544 0 C1570 40 1600 65 1660 85 C1760 115 1950 135 2116 162" transform="translate(-15.1,16.8)" stroke="rgba(255,255,255,0.55)" stroke-width="1" fill="none"/><path d="M1544 0 C1570 40 1600 65 1660 85 C1760 115 1950 135 2116 162" transform="translate(-18.0,20.0)" stroke="rgba(90,90,90,0.16)" stroke-width="1" fill="none"/><path d="M1544 0 C1570 40 1600 65 1660 85 C1760 115 1950 135 2116 162" transform="translate(-20.9,23.2)" stroke="rgba(255,255,255,0.55)" stroke-width="1" fill="none"/><path d="M1544 0 C1570 40 1600 65 1660 85 C1760 115 1950 135 2116 162" transform="translate(-23.8,26.4)" stroke="rgba(90,90,90,0.16)" stroke-width="1" fill="none"/><path d="M1544 0 C1570 40 1600 65 1660 85 C1760 115 1950 135 2116 162" transform="translate(-26.6,29.6)" stroke="rgba(255,255,255,0.55)" stroke-width="1" fill="none"/><path d="M1544 0 C1570 40 1600 65 1660 85 C1760 115 1950 135 2116 162" transform="translate(-29.5,32.8)" stroke="rgba(90,90,90,0.16)" stroke-width="1" fill="none"/><path d="M1544 0 C1570 40 1600 65 1660 85 C1760 115 1950 135 2116 162" transform="translate(-32.4,36.0)" stroke="rgba(255,255,255,0.55)" stroke-width="1" fill="none"/><path d="M1544 0 C1570 40 1600 65 1660 85 C1760 115 1950 135 2116 162" transform="translate(-35.3,39.2)" stroke="rgba(90,90,90,0.16)" stroke-width="1" fill="none"/><path d="M1544 0 C1570 40 1600 65 1660 85 C1760 115 1950 135 2116 162" transform="translate(-38.2,42.4)" stroke="rgba(255,255,255,0.55)" stroke-width="1" fill="none"/><path d="M1544 0 C1570 40 1600 65 1660 85 C1760 115 1950 135 2116 162" transform="translate(-41.0,45.6)" stroke="rgba(90,90,90,0.16)" stroke-width="1" fill="none"/><path d="M1544 0 C1570 40 1600 65 1660 85 C1760 115 1950 135 2116 162" transform="translate(-43.9,48.8)" stroke="rgba(255,255,255,0.55)" stroke-width="1" fill="none"/><path d="M1544 0 C1570 40 1600 65 1660 85 C1760 115 1950 135 2116 162" transform="translate(-46.8,52.0)" stroke="rgba(90,90,90,0.16)" stroke-width="1" fill="none"/><path d="M1544 0 C1570 40 1600 65 1660 85 C1760 115 1950 135 2116 162" transform="translate(-49.7,55.2)" stroke="rgba(255,255,255,0.55)" stroke-width="1" fill="none"/><path d="M1544 0 C1570 40 1600 65 1660 85 C1760 115 1950 135 2116 162" transform="translate(-52.6,58.4)" stroke="rgba(90,90,90,0.16)" stroke-width="1" fill="none"/><path d="M1544 0 C1570 40 1600 65 1660 85 C1760 115 1950 135 2116 162" transform="translate(-55.4,61.6)" stroke="rgba(255,255,255,0.55)" stroke-width="1" fill="none"/><path d="M1544 0 C1570 40 1600 65 1660 85 C1760 115 1950 135 2116 162" transform="translate(-58.3,64.8)" stroke="rgba(90,90,90,0.16)" stroke-width="1" fill="none"/><path d="M1544 0 C1570 40 1600 65 1660 85 C1760 115 1950 135 2116 162" transform="translate(-61.2,68.0)" stroke="rgba(255,255,255,0.55)" stroke-width="1" fill="none"/><path d="M1544 0 C1570 40 1600 65 1660 85 C1760 115 1950 135 2116 162" transform="translate(-64.1,71.2)" stroke="rgba(90,90,90,0.16)" stroke-width="1" fill="none"/>
    </g>
    </svg>
<svg style="position:absolute;left:52px;top:100px;" width="40" height="44" viewBox="0 0 40 44">
      <defs>
        <linearGradient id="lg1" x1="0" y1="0" x2="1" y2="0"><stop offset="0" stop-color="#8aa58a"/><stop offset="1" stop-color="#7fa07c"/></linearGradient>
        <linearGradient id="lg2" x1="0" y1="0" x2="1" y2="1"><stop offset="0" stop-color="#e2473a"/><stop offset="1" stop-color="#d9542a"/></linearGradient>
        <linearGradient id="lg3" x1="0" y1="0" x2="1" y2="1"><stop offset="0" stop-color="#f3c466"/><stop offset="1" stop-color="#f09a4a"/></linearGradient>
      </defs>
      <g fill="none" stroke-width="2" stroke-linejoin="round">
        <path d="M20.00 4.50 L29.09 9.75 L29.09 20.25 L20.00 25.50 L10.91 20.25 L10.91 9.75 Z" stroke="url(#lg1)"/>
        <path d="M10.91 20.25 L20.00 25.50 L20.00 36.00 L10.91 41.25 L1.82 36.00 L1.82 25.50 Z" stroke="url(#lg2)"/>
        <path d="M29.09 20.25 L38.18 25.50 L38.18 36.00 L29.09 41.25 L20.00 36.00 L20.00 25.50 Z" stroke="url(#lg3)"/>
        <path d="M10.91 20.25 L20.00 25.50 L29.09 20.25 M20.00 25.50 L20.00 36.00" stroke="#3b74d0" stroke-width="4.2"/>
        <path d="M10.91 20.25 L20.00 25.50 L29.09 20.25 M20.00 25.50 L20.00 36.00" stroke="#1c2559" stroke-width="1.2"/>
        <circle cx="20.00" cy="14.50" r="2.8" stroke="#2f7ae0" stroke-width="2.2"/>
      </g></svg><div style="position:absolute;left:42px;top:171.5px;width:60.5px;height:61px;background:#0b84ff;border-radius:12px;"></div><svg style="position:absolute;left:57px;top:187px;" width="30" height="30" viewBox="0 0 30 30"><path d="M15 1.5 L28.5 12.5 L28.5 26 Q28.5 29 25.5 29 L19.5 29 L19.5 21 Q19.5 16.5 15 16.5 Q10.5 16.5 10.5 21 L10.5 29 L4.5 29 Q1.5 29 1.5 26 L1.5 12.5 Z" fill="#fff" stroke="#fff" stroke-width="1.5" stroke-linejoin="round"/></svg><div style="position:absolute;left:42px;top:281px;width:60.5px;height:60.5px;background:#232e6b;border-radius:12px;"></div><div style="position:absolute;left:42px;top:390px;width:60.5px;height:60.5px;background:#232e6b;border-radius:12px;"></div><div style="position:absolute;left:42px;top:499.5px;width:60.5px;height:60.5px;background:#232e6b;border-radius:12px;"></div><div style="position:absolute;left:42px;top:608.5px;width:60.5px;height:60.5px;background:#232e6b;border-radius:12px;"></div><div style="position:absolute;left:42px;top:717.5px;width:60.5px;height:60.5px;background:#232e6b;border-radius:12px;"></div><div style="position:absolute;left:42px;top:826.5px;width:60.5px;height:60.5px;background:#232e6b;border-radius:12px;"></div><div style="position:absolute;left:42px;top:936px;width:60.5px;height:60.5px;background:#232e6b;border-radius:12px;"></div><div style="position:absolute;left:42px;top:1127px;width:60.5px;height:60.5px;background:#232e6b;border-radius:12px;"></div><div style="position:absolute;left:42px;top:1236px;width:60.5px;height:60.5px;background:#232e6b;border-radius:12px;"></div><svg style="position:absolute;left:56px;top:297px;" width="32" height="32" viewBox="0 0 32 32"><g fill="none" stroke="#dfe2ec" stroke-width="2.2" stroke-linecap="round" stroke-linejoin="round"><rect x="3" y="5" width="26" height="24" rx="6"/><path d="M3 12 H29 M10 2.5 V7 M22 2.5 V7 M11.5 20 L15 23 L21 17"/></g></svg><svg style="position:absolute;left:56px;top:405px;" width="32" height="32" viewBox="0 0 32 32"><g fill="none" stroke="#dfe2ec" stroke-width="2.2" stroke-linecap="round" stroke-linejoin="round"><path d="M4 15 Q6 4 16 3 Q27 4 29 14 Q24 12 20 15 Q16 11 11 15 Q8 13 4 15 Z"/><path d="M16 3 Q11 8 11 15 M16 3 Q21 8 20 15 M15.5 15 L12 24"/><path d="M3 27 Q7 24 11 27 Q15 30 19 27 Q23 24 29 27"/></g></svg><svg style="position:absolute;left:56px;top:514px;" width="32" height="32" viewBox="0 0 32 32"><g fill="none" stroke="#dfe2ec" stroke-width="2.2" stroke-linecap="round" stroke-linejoin="round"><path d="M23 10 A11 11 0 1 0 16 29"/><path d="M12 3 H18 M15 3 V7 M15 12 V18 M22 5 L25 8"/><path d="M20 19 L28 23.5 L20 28 Z"/></g></svg><svg style="position:absolute;left:56px;top:623px;" width="32" height="32" viewBox="0 0 32 32"><g fill="none" stroke="#dfe2ec" stroke-width="2.2" stroke-linecap="round" stroke-linejoin="round"><path d="M9 4 H23 V12 Q23 19 16 19 Q9 19 9 12 Z"/><path d="M6 5 Q5 9 7 11 M26 5 Q27 9 25 11 M16 19 V24 M11 28 Q11 24 16 24 Q21 24 21 28 Z M8 29 H24"/></g></svg><svg style="position:absolute;left:56px;top:732px;" width="32" height="32" viewBox="0 0 32 32"><g fill="none" stroke="#dfe2ec" stroke-width="2.2" stroke-linecap="round" stroke-linejoin="round"><path d="M14 26 H9.5 Q5.5 26 5.5 22 V8 Q5.5 4 9.5 4 H22.5 Q26.5 4 26.5 8 V22 Q26.5 26 22.5 26 H21"/><path d="M11.5 4 V21 M5.5 21 H26.5"/><path d="M14 21 V28.5 L17.5 26 L21 28.5 V21"/></g></svg><svg style="position:absolute;left:56px;top:841px;" width="32" height="32" viewBox="0 0 32 32"><g fill="none" stroke="#dfe2ec" stroke-width="2.2" stroke-linecap="round" stroke-linejoin="round"><path d="M12 5 H20 M8 10 H24 M5 15 H27 V22 Q27 28 21 28 H11 Q5 28 5 22 Z"/></g></svg><svg style="position:absolute;left:56px;top:950px;" width="32" height="32" viewBox="0 0 32 32"><g fill="#dfe2ec"><circle cx="9" cy="16" r="2.3"/><circle cx="16" cy="16" r="2.3"/><circle cx="23" cy="16" r="2.3"/></g></svg><svg style="position:absolute;left:56px;top:1141px;" width="32" height="32" viewBox="0 0 32 32"><g fill="none" stroke="#dfe2ec" stroke-width="2.2" stroke-linecap="round" stroke-linejoin="round"><circle cx="16" cy="16.5" r="4.3"/><path d="M12.5 5 A11.8 11.8 0 0 0 16.5 28.3"/><path d="M19.5 4.6 A11.8 11.8 0 0 1 21 27.2"/><path d="M8.8 5.2 L12.8 4.6 L12.4 8.6"/><path d="M19.6 27.8 L23.6 27.5 L24.2 23.5"/></g></svg><svg style="position:absolute;left:56px;top:1250px;" width="32" height="32" viewBox="0 0 32 32"><g fill="none" stroke="#dfe2ec" stroke-width="2.2" stroke-linecap="round" stroke-linejoin="round"><path d="M13 4.6 A12.5 12.5 0 1 0 27.3 20.8"/><path d="M17 2.5 V14 H29 A12 12 0 0 0 17 2.5 Z"/></g></svg>
<svg style="position:absolute;left:2008px;top:106px;" width="32" height="32" viewBox="0 0 32 32"><g fill="none" stroke="#e8eaf2" stroke-width="2" stroke-linecap="round" stroke-linejoin="round"><circle cx="14.5" cy="15" r="9.8"/><path d="M21.5 22 L28 28.5"/></g></svg><svg style="position:absolute;left:2068px;top:106px;" width="32" height="32" viewBox="0 0 32 32"><g fill="none" stroke="#e8eaf2" stroke-width="2" stroke-linecap="round" stroke-linejoin="round"><path d="M6 24 Q8.5 21.5 8.5 16 Q8.5 7 16.5 7 Q24.5 7 24.5 16 Q24.5 21.5 27 24 Q27 25.5 25.5 25.5 H7.5 Q6 25.5 6 24 Z"/><path d="M13.5 26.5 Q13.5 29.5 16.5 29.5 Q19.5 29.5 19.5 26.5"/></g></svg><div style="position:absolute;left:2085.5px;top:96.5px;width:26.5px;height:22.5px;background:#ea4d55;border-radius:11px;"></div><svg style="position:absolute;left:2131px;top:110px;" width="28" height="28" viewBox="0 0 28 28"><g fill="none" stroke="#e8eaf2" stroke-width="2" stroke-linecap="round" stroke-linejoin="round"><path d="M12 2.5 H16 L17 6 L19.8 7.6 L23.3 6.6 L25.3 10 L22.7 12.6 V15.4 L25.3 18 L23.3 21.4 L19.8 20.4 L17 22 L16 25.5 H12 L11 22 L8.2 20.4 L4.7 21.4 L2.7 18 L5.3 15.4 V12.6 L2.7 10 L4.7 6.6 L8.2 7.6 L11 6 Z"/><circle cx="14" cy="14" r="3.6"/></g></svg>
<svg style="position:absolute;left:2194.5px;top:100.5px;" width="46" height="46" viewBox="0 0 148 148"><defs><clipPath id="av"><circle cx="74" cy="74" r="74"/></clipPath></defs>
    <g clip-path="url(#av)"><g transform="translate(-8,0)">
    <defs>
    <linearGradient id="pbgav" x1="0" y1="0" x2="1" y2="1"><stop offset="0" stop-color="#cabd9f"/><stop offset="0.5" stop-color="#b9ab8a"/><stop offset="1" stop-color="#a89a7c"/></linearGradient>
    <radialGradient id="fcav" cx="0.5" cy="0.45" r="0.6"><stop offset="0" stop-color="#ecd3c0"/><stop offset="0.75" stop-color="#dfbaa0"/><stop offset="1" stop-color="#cc9f82"/></radialGradient>
    <linearGradient id="hrav" x1="0" y1="0" x2="0.5" y2="1"><stop offset="0" stop-color="#d8bb94"/><stop offset="0.55" stop-color="#c39a72"/><stop offset="1" stop-color="#a87f5c"/></linearGradient>
    <filter id="blav" x="-5%" y="-5%" width="110%" height="110%"><feGaussianBlur stdDeviation="1.4"/></filter>
    </defs>
    <rect width="148" height="148" fill="url(#pbgav)"/>
    <g filter="url(#blav)">
      <path d="M0 0 H36 Q26 70 16 148 H0 Z" fill="#c5b898" opacity="0.6"/>
      <path d="M46 2 Q80 -6 112 6 Q132 22 134 56 Q138 84 128 104 Q118 110 110 104 L96 100 L62 100 Q50 118 34 130 Q20 140 8 142 Q16 126 22 110 Q30 86 32 62 Q34 30 46 2 Z" fill="url(#hrav)"/>
      <path d="M54 68 Q50 88 58 100 L70 96 Q66 82 66 68 Z" fill="#5e4232"/>
      <path d="M112 64 Q118 80 112 96 L104 94 Q110 80 106 64 Z" fill="#4e3728"/>
      <path d="M68 84 Q88 98 108 84 L108 148 L88 148 L48 110 Q62 104 70 96 Z" fill="#d3ab90"/>
      <ellipse cx="90" cy="61" rx="25" ry="32" fill="url(#fcav)"/>
      <path d="M63 48 Q62 20 88 12 Q114 12 118 44 Q108 26 92 26 Q72 28 63 48 Z" fill="#caa57c"/>
      <path d="M58 30 Q70 8 96 10 Q78 16 66 44 Z" fill="#dcc19c"/>
      <ellipse cx="73" cy="52" rx="4.8" ry="2.5" fill="#5b4032"/><ellipse cx="101" cy="51" rx="4.8" ry="2.5" fill="#5b4032"/>
      <path d="M65 46 Q73 41 81 46 M93 45 Q101 40 109 45" stroke="#9a7458" stroke-width="1.6" fill="none"/>
      <path d="M87 60 Q85 68 89 70 Q93 70 95 68" stroke="#b98c74" stroke-width="1.5" fill="none"/>
      <path d="M76 76 Q90 90 104 75 Q98 86 90 86 Q82 86 76 76 Z" fill="#f6efe8" stroke="#a0645a" stroke-width="1.3"/>
      <path d="M0 148 V122 Q22 110 48 108 L88 148 Z" fill="#4d4e4c"/>
      <path d="M105 90 Q126 92 148 104 V148 H107 Q110 120 105 90 Z" fill="#484948"/>
    </g></g><rect x="140" width="20" height="148" fill="#b9aa88"/></g></svg>
<div style="position:absolute;left:1893px;top:251px;width:240px;height:48px;background:#fff;border-radius:6px;"></div>
<svg style="position:absolute;left:1905px;top:261px;" width="28" height="28" viewBox="0 0 28 28"><g fill="none" stroke="#666" stroke-width="2" stroke-linecap="round" stroke-linejoin="round"><path d="M12 6 H6 Q3 6 3 9 V22 Q3 25 6 25 H19 Q22 25 22 22 V16"/><path d="M15 3.5 H24.5 V13 M24.5 3.5 L13 15"/></g></svg>
<div style="position:absolute;left:2157px;top:251px;width:52px;height:48px;background:#fff;border-radius:6px;"></div>
<svg style="position:absolute;left:2171px;top:268px;" width="26" height="12" viewBox="0 0 26 12"><g fill="#555"><circle cx="4" cy="6" r="2.2"/><circle cx="12" cy="6" r="2.2"/><circle cx="20" cy="6" r="2.2"/></g></svg>
<div style="position:absolute;left:200px;top:388.5px;width:423px;height:344.5px;background:#fff;border:1px solid #e1e4ea;border-radius:10px;box-sizing:border-box;"></div>
<div style="position:absolute;left:335.5px;top:288.2px;width:152px;height:152px;background:#ece6d8;border-radius:15px;"></div>
<svg style="position:absolute;left:337.5px;top:290.2px;" width="148" height="148" viewBox="0 0 148 148"><defs><clipPath id="pc337.5"><rect x="0" y="0" width="148" height="148" rx="13"/></clipPath></defs>
    <g clip-path="url(#pc337.5)">
    <defs>
    <linearGradient id="pbgc1" x1="0" y1="0" x2="1" y2="1"><stop offset="0" stop-color="#cabd9f"/><stop offset="0.5" stop-color="#b9ab8a"/><stop offset="1" stop-color="#a89a7c"/></linearGradient>
    <radialGradient id="fcc1" cx="0.5" cy="0.45" r="0.6"><stop offset="0" stop-color="#ecd3c0"/><stop offset="0.75" stop-color="#dfbaa0"/><stop offset="1" stop-color="#cc9f82"/></radialGradient>
    <linearGradient id="hrc1" x1="0" y1="0" x2="0.5" y2="1"><stop offset="0" stop-color="#d8bb94"/><stop offset="0.55" stop-color="#c39a72"/><stop offset="1" stop-color="#a87f5c"/></linearGradient>
    <filter id="blc1" x="-5%" y="-5%" width="110%" height="110%"><feGaussianBlur stdDeviation="1.4"/></filter>
    </defs>
    <rect width="148" height="148" fill="url(#pbgc1)"/>
    <g filter="url(#blc1)">
      <path d="M0 0 H36 Q26 70 16 148 H0 Z" fill="#c5b898" opacity="0.6"/>
      <path d="M46 2 Q80 -6 112 6 Q132 22 134 56 Q138 84 128 104 Q118 110 110 104 L96 100 L62 100 Q50 118 34 130 Q20 140 8 142 Q16 126 22 110 Q30 86 32 62 Q34 30 46 2 Z" fill="url(#hrc1)"/>
      <path d="M54 68 Q50 88 58 100 L70 96 Q66 82 66 68 Z" fill="#5e4232"/>
      <path d="M112 64 Q118 80 112 96 L104 94 Q110 80 106 64 Z" fill="#4e3728"/>
      <path d="M68 84 Q88 98 108 84 L108 148 L88 148 L48 110 Q62 104 70 96 Z" fill="#d3ab90"/>
      <ellipse cx="90" cy="61" rx="25" ry="32" fill="url(#fcc1)"/>
      <path d="M63 48 Q62 20 88 12 Q114 12 118 44 Q108 26 92 26 Q72 28 63 48 Z" fill="#caa57c"/>
      <path d="M58 30 Q70 8 96 10 Q78 16 66 44 Z" fill="#dcc19c"/>
      <ellipse cx="73" cy="52" rx="4.8" ry="2.5" fill="#5b4032"/><ellipse cx="101" cy="51" rx="4.8" ry="2.5" fill="#5b4032"/>
      <path d="M65 46 Q73 41 81 46 M93 45 Q101 40 109 45" stroke="#9a7458" stroke-width="1.6" fill="none"/>
      <path d="M87 60 Q85 68 89 70 Q93 70 95 68" stroke="#b98c74" stroke-width="1.5" fill="none"/>
      <path d="M76 76 Q90 90 104 75 Q98 86 90 86 Q82 86 76 76 Z" fill="#f6efe8" stroke="#a0645a" stroke-width="1.3"/>
      <path d="M0 148 V122 Q22 110 48 108 L88 148 Z" fill="#4d4e4c"/>
      <path d="M105 90 Q126 92 148 104 V148 H107 Q110 120 105 90 Z" fill="#484948"/>
    </g></g></svg>
<div style="position:absolute;left:316px;top:590.6px;width:51px;height:50.5px;background:#eff0f3;border-radius:10px;"></div>
<div style="position:absolute;left:386.5px;top:590.6px;width:51px;height:50.5px;background:#eff0f3;border-radius:10px;"></div>
<div style="position:absolute;left:455.8px;top:590.6px;width:51px;height:50.5px;background:#eff0f3;border-radius:10px;"></div>
<div style="position:absolute;left:375px;top:611.5px;width:4.5px;height:4.5px;background:#222;border-radius:50%;"></div>
<div style="position:absolute;left:375px;top:621px;width:4.5px;height:4.5px;background:#222;border-radius:50%;"></div>
<div style="position:absolute;left:444.8px;top:611.5px;width:4.5px;height:4.5px;background:#222;border-radius:50%;"></div>
<div style="position:absolute;left:444.8px;top:621px;width:4.5px;height:4.5px;background:#222;border-radius:50%;"></div>
<div style="position:absolute;left:328.5px;top:654px;width:165.5px;height:47.5px;border:1.8px solid #e6636a;border-radius:6px;box-sizing:border-box;"></div>
<div style="position:absolute;left:200.5px;top:747px;width:422px;height:468px;background:#fff;border:1px solid #e1e4ea;border-radius:10px;box-sizing:border-box;"></div>
<svg style="position:absolute;left:231.5px;top:837.5px;" width="60" height="60" viewBox="0 0 60 60"><defs><clipPath id="pm"><rect width="60" height="60" rx="10"/></clipPath><filter id="bm"><feGaussianBlur stdDeviation="0.7"/></filter></defs>
    <g clip-path="url(#pm)"><rect width="60" height="60" fill="#ede8e0"/><g filter="url(#bm)">
    <rect x="44" y="0" width="16" height="42" fill="#d9dadc"/>
    <rect x="47" y="6" width="4" height="5" fill="#8a9099"/><rect x="53" y="6" width="4" height="5" fill="#8a9099"/><rect x="47" y="16" width="4" height="5" fill="#8a9099"/><rect x="53" y="16" width="4" height="5" fill="#8a9099"/><rect x="47" y="26" width="4" height="5" fill="#8a9099"/>
    <path d="M4 8 Q10 4 12 14 Q8 22 6 34 Z" fill="#8aa07a"/>
    <rect x="2" y="22" width="6" height="16" rx="2" fill="#3a78c0"/>
    <path d="M14 44 Q14 30 22 28 L24 44 Z" fill="#4a4a55"/>
    <ellipse cx="33" cy="17" rx="6.5" ry="8" fill="#3a2418"/>
    <ellipse cx="33" cy="19" rx="4.5" ry="5.5" fill="#8a5a3c"/>
    <path d="M20 46 Q20 30 33 28 Q46 30 46 46 Z" fill="#e49a36"/>
    <path d="M0 40 L60 36 L60 60 L0 60 Z" fill="#f0a232"/>
    <ellipse cx="20" cy="50" rx="7" ry="3" fill="#6a5a4a"/>
    </g></g></svg>
<svg style="position:absolute;left:231.5px;top:955.5px;" width="60" height="60" viewBox="0 0 60 60"><defs><clipPath id="pr"><rect width="60" height="60" rx="10"/></clipPath>
    <radialGradient id="rg" cx="0.5" cy="0.35" r="0.75"><stop offset="0" stop-color="#a3a3a3"/><stop offset="0.6" stop-color="#6a6a6a"/><stop offset="1" stop-color="#2a2a2a"/></radialGradient><filter id="br"><feGaussianBlur stdDeviation="0.6"/></filter></defs>
    <g clip-path="url(#pr)"><rect width="60" height="60" fill="url(#rg)"/><g filter="url(#br)">
    <path d="M6 60 Q8 42 22 38 L30 42 L38 38 Q52 42 54 60 Z" fill="#1f2b52"/>
    <rect x="26" y="32" width="8" height="8" fill="#b88a6e"/>
    <ellipse cx="30" cy="23" rx="8.5" ry="10.5" fill="#c99e82"/>
    <path d="M21 20 Q21 9 30 9 Q39 9 39 20 Q37 13 30 13 Q23 13 21 20 Z" fill="#2a1c14"/>
    <path d="M22 26 Q23 36 30 36 Q37 36 38 26 Q36 31 30 31 Q24 31 22 26 Z" fill="#4a3022"/>
    <ellipse cx="26.5" cy="22" rx="1.3" ry="0.9" fill="#2a1c14"/><ellipse cx="33.5" cy="22" rx="1.3" ry="0.9" fill="#2a1c14"/>
    </g></g></svg>
<svg style="position:absolute;left:231.5px;top:1055.5px;" width="60" height="60" viewBox="0 0 60 60"><defs><clipPath id="pz"><rect width="60" height="60" rx="10"/></clipPath><filter id="bz"><feGaussianBlur stdDeviation="0.6"/></filter></defs>
    <g clip-path="url(#pz)"><rect width="60" height="60" fill="#e6e4e3"/><g filter="url(#bz)">
    <path d="M2 60 Q0 30 8 12 Q20 0 36 2 Q54 6 58 26 Q60 44 56 60 Z" fill="#4e3528"/>
    <path d="M12 30 Q12 8 32 8 Q50 10 50 30 Q50 50 32 52 Q14 50 12 30 Z" fill="#ecd3c6"/>
    <ellipse cx="24" cy="24" rx="3" ry="1.6" fill="#4a3a30"/><ellipse cx="39" cy="24" rx="3" ry="1.6" fill="#4a3a30"/>
    <path d="M25 38 Q31 41 37 37" stroke="#c46a6a" stroke-width="2" fill="none"/>
    <path d="M8 60 Q10 48 22 48 Q32 52 44 48 Q54 50 56 60 Z" fill="#b3b1b0"/>
    <path d="M54 46 L60 40 L60 58 Z" fill="#2a2a2a"/>
    </g></g></svg>
<div style="position:absolute;left:231px;top:917px;width:361px;height:1px;background:#e9e9ec;"></div>
<div style="position:absolute;left:231px;top:1035.5px;width:361px;height:1px;background:#e9e9ec;"></div>
<div style="position:absolute;left:231px;top:1135.5px;width:361px;height:1px;background:#e9e9ec;"></div>
<div style="position:absolute;left:637px;top:387.5px;width:1525px;height:90.5px;background:#fff;border:1px solid #e1e4ea;border-radius:10px;box-sizing:border-box;"></div>
<div style="position:absolute;left:667px;top:470px;width:115.5px;height:5px;background:#0b84ff;"></div>
<svg style="position:absolute;left:1860px;top:426px;" width="24" height="12" viewBox="0 0 24 12"><g fill="#333"><circle cx="4" cy="6" r="2"/><circle cx="12" cy="6" r="2"/><circle cx="20" cy="6" r="2"/></g></svg>
<svg style="position:absolute;left:2104px;top:418px;" width="30" height="30" viewBox="0 0 30 30"><g fill="none" stroke="#444" stroke-width="2" stroke-linecap="round"><path d="M3 6 H15 M21 6 H27 M3 15 H7 M13 15 H27 M3 24 H15 M21 24 H27"/><circle cx="18" cy="6" r="3"/><circle cx="10" cy="15" r="3"/><circle cx="18" cy="24" r="3"/></g></svg>
<div style="position:absolute;left:637px;top:494.5px;width:1525px;height:129px;background:#fff;border:1px solid #e1e4ea;border-radius:10px;box-sizing:border-box;"></div>
<div style="position:absolute;left:668px;top:525px;width:68px;height:68px;background:#fde5e1;border-radius:10px;"></div>
<svg style="position:absolute;left:687px;top:544px;" width="30" height="30" viewBox="0 0 30 30"><g fill="none" stroke="#e26d62" stroke-width="1.8" stroke-linecap="round" stroke-linejoin="round"><rect x="3" y="5" width="24" height="22" rx="5"/><path d="M3 11 H27 M9 2.5 V6.5 M21 2.5 V6.5 M11 18 L14 21 L19 16"/></g></svg>
<div style="position:absolute;left:637px;top:639px;width:1525px;height:358.5px;background:#fff;border:1px solid #e1e4ea;border-radius:10px;box-sizing:border-box;"></div>
<div style="position:absolute;left:668px;top:669px;width:68px;height:68px;background:#e2f3fc;border-radius:10px;"></div>
<svg style="position:absolute;left:687px;top:688px;" width="30" height="30" viewBox="0 0 30 30"><g fill="none" stroke="#3d9bd6" stroke-width="1.8" stroke-linecap="round" stroke-linejoin="round"><path d="M22 6.5 A11 11 0 1 0 9 25"/><path d="M13 9 V15 L10 17"/><circle cx="20" cy="17" r="3"/><path d="M14.5 27 Q14.5 22 20 22 Q25.5 22 25.5 27 Z"/></g></svg>
<div style="position:absolute;left:760.5px;top:761.5px;width:181.5px;height:63.5px;background:#f4f4f4;border-left:4px solid #8a8a8a;border-radius:5px;box-sizing:border-box;"></div>
<div style="position:absolute;left:948px;top:761.5px;width:1091px;height:63.5px;background:#f4f4f4;border-left:4px solid #8a8a8a;border-radius:5px;box-sizing:border-box;"></div>
<div style="position:absolute;left:850.5px;top:860.5px;width:1091.5px;height:2px;background:#e3e3e3;"></div>
<div style="position:absolute;left:849.75px;top:827px;width:1.5px;height:32px;background-image:linear-gradient(#d6d6d6 50%,transparent 50%);background-size:1.5px 6px;"></div>
<div style="position:absolute;left:846.0px;top:857px;width:9px;height:9px;background:#d2d2d2;border-radius:50%;"></div>
<div style="position:absolute;left:1031.75px;top:827px;width:1.5px;height:32px;background-image:linear-gradient(#d6d6d6 50%,transparent 50%);background-size:1.5px 6px;"></div>
<div style="position:absolute;left:1028.0px;top:857px;width:9px;height:9px;background:#d2d2d2;border-radius:50%;"></div>
<div style="position:absolute;left:1213.75px;top:827px;width:1.5px;height:32px;background-image:linear-gradient(#d6d6d6 50%,transparent 50%);background-size:1.5px 6px;"></div>
<div style="position:absolute;left:1210.0px;top:857px;width:9px;height:9px;background:#d2d2d2;border-radius:50%;"></div>
<div style="position:absolute;left:1395.75px;top:827px;width:1.5px;height:32px;background-image:linear-gradient(#d6d6d6 50%,transparent 50%);background-size:1.5px 6px;"></div>
<div style="position:absolute;left:1392.0px;top:857px;width:9px;height:9px;background:#d2d2d2;border-radius:50%;"></div>
<div style="position:absolute;left:1577.75px;top:827px;width:1.5px;height:32px;background-image:linear-gradient(#d6d6d6 50%,transparent 50%);background-size:1.5px 6px;"></div>
<div style="position:absolute;left:1574.0px;top:857px;width:9px;height:9px;background:#d2d2d2;border-radius:50%;"></div>
<div style="position:absolute;left:1759.25px;top:827px;width:1.5px;height:32px;background-image:linear-gradient(#d6d6d6 50%,transparent 50%);background-size:1.5px 6px;"></div>
<div style="position:absolute;left:1755.5px;top:857px;width:9px;height:9px;background:#0b84ff;border-radius:50%;"></div>
<div style="position:absolute;left:1941.05px;top:827px;width:1.5px;height:32px;background-image:linear-gradient(#d6d6d6 50%,transparent 50%);background-size:1.5px 6px;"></div>
<div style="position:absolute;left:1937.3px;top:857px;width:9px;height:9px;background:#d2d2d2;border-radius:50%;"></div>
<div style="position:absolute;left:1761px;top:878px;width:31.5px;height:27.5px;background:#0b84ff;border-radius:3px;"></div>
<div style="position:absolute;left:637px;top:1012.5px;width:1525px;height:167px;background:#fff;border:1px solid #e1e4ea;border-radius:10px;box-sizing:border-box;"></div>
<div style="position:absolute;left:668px;top:1042.5px;width:68px;height:68px;background:#fde5e1;border-radius:10px;"></div>
<svg style="position:absolute;left:687px;top:1061px;" width="30" height="30" viewBox="0 0 30 30"><g fill="none" stroke="#e26d62" stroke-width="1.8" stroke-linecap="round" stroke-linejoin="round"><rect x="3" y="5" width="24" height="22" rx="5"/><path d="M3 11 H27 M9 2.5 V6.5 M21 2.5 V6.5 M11 18 L14 21 L19 16"/></g></svg>
<div style="position:absolute;left:760px;top:1099.3px;width:169.5px;height:49.5px;background:#fff;border:1.5px solid #e2e2e2;border-left:4px solid #1fae5b;border-radius:5px;box-sizing:border-box;"></div>
<div style="position:absolute;left:948px;top:1099.3px;width:258px;height:49.5px;background:#fff;border:1.5px solid #e2e2e2;border-left:4px solid #1fae5b;border-radius:5px;box-sizing:border-box;"></div>
<div style="position:absolute;left:1224px;top:1099.3px;width:216.5px;height:49.5px;background:#fff;border:1.5px solid #e2e2e2;border-left:4px solid #e5484d;border-radius:5px;box-sizing:border-box;"></div>
<div style="position:absolute;left:1459.5px;top:1099.3px;width:127px;height:49.5px;background:#fff;border:1.5px solid #e2e2e2;border-left:4px solid #e0b62a;border-radius:5px;box-sizing:border-box;"></div>
<div style="position:absolute;left:637px;top:1195px;width:1525px;height:200px;background:#fff;border:1px solid #e1e4ea;border-radius:10px;box-sizing:border-box;"></div>
<div style="position:absolute;left:668px;top:1225.5px;width:68px;height:68px;background:#e2f3fc;border-radius:10px;"></div>
<svg style="position:absolute;left:687px;top:1244px;" width="30" height="30" viewBox="0 0 30 30"><g fill="none" stroke="#3d9bd6" stroke-width="1.8" stroke-linecap="round" stroke-linejoin="round"><path d="M4 14 Q6 4 15 3.5 Q25 4 27 13 Q23 11 19.5 14 Q15.5 10.5 11 14 Q8 12 4 14 Z"/><path d="M15 3.5 Q10.5 8 10.5 14 M15 3.5 Q19.5 8 19.5 14 M14.5 14 L11.5 22"/><path d="M3 25 Q7 22 11 25 Q15 28 19 25 Q23 22 27 25"/></g></svg>
<div style="position:absolute;left:760px;top:1287.5px;width:245px;height:80px;background:#fff;border:1.5px solid #9cc6ef;border-left:4px solid #2b86e0;border-radius:5px;box-sizing:border-box;"></div>
<div class="t" id="t0" style="top:111.93px;font-size:22.53px;color:#fff;letter-spacing:-0.514px;-webkit-text-stroke:0.97px #fff;left:166.00px;"><span>My Space</span></div>
<div class="t" id="t1" style="top:111.93px;font-size:22.53px;color:#fff;letter-spacing:-0.516px;-webkit-text-stroke:0.77px #fff;left:311.00px;"><span>Team</span></div>
<div class="t" id="t2" style="top:111.93px;font-size:22.53px;color:#fff;letter-spacing:-0.105px;-webkit-text-stroke:0.77px #fff;left:413.60px;"><span>Organization</span></div>
<div class="t" id="t3" style="top:178.18px;font-size:22.24px;color:#222;letter-spacing:-0.146px;-webkit-text-stroke:0.76px #222;left:167.00px;"><span>Overview</span></div>
<div class="t" id="t4" style="top:178.18px;font-size:22.24px;color:#333;letter-spacing:-0.275px;-webkit-text-stroke:0.44px #333;left:308.60px;"><span>Dashboard</span></div>
<div class="t" id="t5" style="top:178.18px;font-size:22.24px;color:#333;letter-spacing:-0.192px;-webkit-text-stroke:0.44px #333;left:464.80px;"><span>Calendar</span></div>
<div class="t" id="t6" style="top:243.33px;font-size:14.97px;color:#e4e6ef;letter-spacing:0.516px;-webkit-text-stroke:0.51px #e4e6ef;left:-528.00px;width:1200px;text-align:center;"><span>Home</span></div>
<div class="t" id="t7" style="top:352.33px;font-size:14.97px;color:#e4e6ef;letter-spacing:0.625px;-webkit-text-stroke:0.51px #e4e6ef;left:-528.00px;width:1200px;text-align:center;"><span>Attendance</span></div>
<div class="t" id="t8" style="top:461.83px;font-size:14.97px;color:#e4e6ef;letter-spacing:-0.159px;-webkit-text-stroke:0.51px #e4e6ef;left:-528.00px;width:1200px;text-align:center;"><span>Leave</span></div>
<div class="t" id="t9" style="top:571.33px;font-size:14.97px;color:#e4e6ef;letter-spacing:0.519px;-webkit-text-stroke:0.51px #e4e6ef;left:-528.00px;width:1200px;text-align:center;"><span>Timesheet</span></div>
<div class="t" id="t10" style="top:680.33px;font-size:14.97px;color:#e4e6ef;letter-spacing:0.574px;-webkit-text-stroke:0.51px #e4e6ef;left:-528.00px;width:1200px;text-align:center;"><span>Performance</span></div>
<div class="t" id="t11" style="top:789.33px;font-size:14.97px;color:#e4e6ef;letter-spacing:0.406px;-webkit-text-stroke:0.51px #e4e6ef;left:-528.00px;width:1200px;text-align:center;"><span>LMS</span></div>
<div class="t" id="t12" style="top:898.33px;font-size:14.97px;color:#e4e6ef;letter-spacing:-0.087px;-webkit-text-stroke:0.51px #e4e6ef;left:-528.00px;width:1200px;text-align:center;"><span>Cases</span></div>
<div class="t" id="t13" style="top:1007.33px;font-size:14.97px;color:#e4e6ef;letter-spacing:0.473px;-webkit-text-stroke:0.51px #e4e6ef;left:-528.00px;width:1200px;text-align:center;"><span>More</span></div>
<div class="t" id="t14" style="top:1198.33px;font-size:14.97px;color:#e4e6ef;letter-spacing:0.477px;-webkit-text-stroke:0.51px #e4e6ef;left:-528.00px;width:1200px;text-align:center;"><span>Operations</span></div>
<div class="t" id="t15" style="top:1307.33px;font-size:14.97px;color:#e4e6ef;letter-spacing:0.225px;-webkit-text-stroke:0.51px #e4e6ef;left:-528.00px;width:1200px;text-align:center;"><span>Reports</span></div>
<div class="t" id="t16" style="top:464.54px;font-size:21.80px;color:#666;letter-spacing:-0.247px;-webkit-text-stroke:0.44px #666;left:-189.00px;width:1200px;text-align:center;"><span>ZY198 - <b style="color:#222">Christine</b></span></div>
<div class="t" id="t17" style="top:495.94px;font-size:21.80px;color:#666;letter-spacing:-0.665px;-webkit-text-stroke:0.44px #666;left:-189.00px;width:1200px;text-align:center;"><span>HR Head</span></div>
<div class="t" id="t18" style="top:551.04px;font-size:21.80px;color:#1fae5b;letter-spacing:-0.251px;-webkit-text-stroke:0.44px #1fae5b;left:-188.30px;width:1200px;text-align:center;"><span>Remote In</span></div>
<div class="t" id="t19" style="top:601.51px;font-size:26.45px;color:#222;letter-spacing:-1.211px;-webkit-text-stroke:0.90px #222;left:-258.50px;width:1200px;text-align:center;"><span>23</span></div>
<div class="t" id="t20" style="top:601.51px;font-size:26.45px;color:#222;letter-spacing:-1.211px;-webkit-text-stroke:0.90px #222;left:-188.50px;width:1200px;text-align:center;"><span>18</span></div>
<div class="t" id="t21" style="top:601.51px;font-size:26.45px;color:#222;letter-spacing:-1.211px;-webkit-text-stroke:0.90px #222;left:-119.00px;width:1200px;text-align:center;"><span>41</span></div>
<div class="t" id="t22" style="top:667.39px;font-size:21.51px;color:#e5484d;letter-spacing:0.444px;-webkit-text-stroke:0.43px #e5484d;left:-188.20px;width:1200px;text-align:center;"><span>Check-out</span></div>
<div class="t" id="t23" style="top:783.08px;font-size:24.71px;color:#222;letter-spacing:0.258px;-webkit-text-stroke:0.84px #222;left:231.50px;"><span>Reportees</span></div>
<div class="t" id="t24" style="top:839.43px;font-size:22.53px;color:#666;letter-spacing:-1.013px;-webkit-text-stroke:0.45px #666;left:310.00px;"><span>1237 - <b style="color:#222">Mary</b></span></div>
<div class="t" id="t25" style="top:869.93px;font-size:22.53px;color:#e5484d;letter-spacing:-0.338px;-webkit-text-stroke:0.45px #e5484d;left:310.00px;"><span>Yet to check-in</span></div>
<div class="t" id="t26" style="top:957.43px;font-size:22.53px;color:#666;letter-spacing:-0.564px;-webkit-text-stroke:0.45px #666;left:310.00px;"><span>HR204 - <b style="color:#222">Randall</b></span></div>
<div class="t" id="t27" style="top:988.93px;font-size:22.53px;color:#e5484d;letter-spacing:-0.338px;-webkit-text-stroke:0.45px #e5484d;left:310.00px;"><span>Yet to check-in</span></div>
<div class="t" id="t28" style="top:1057.53px;font-size:22.53px;color:#666;letter-spacing:-0.941px;-webkit-text-stroke:0.45px #666;left:310.00px;"><span>ZY181 - <b style="color:#222">Rodriguez</b></span></div>
<div class="t" id="t29" style="top:1088.53px;font-size:22.53px;color:#e5484d;letter-spacing:-0.338px;-webkit-text-stroke:0.45px #e5484d;left:310.00px;"><span>Yet to check-in</span></div>
<div class="t" id="t30" style="top:1156.93px;font-size:22.53px;color:#1c7fe6;letter-spacing:-0.748px;-webkit-text-stroke:0.45px #1c7fe6;left:231.00px;"><span>+8 More</span></div>
<div class="t" id="t31" style="top:424.26px;font-size:22.97px;color:#222;letter-spacing:-0.062px;-webkit-text-stroke:0.78px #222;left:680.00px;"><span>Activities</span></div>
<div class="t" id="t32" style="top:424.26px;font-size:22.97px;color:#333;letter-spacing:-1.090px;-webkit-text-stroke:0.46px #333;left:819.00px;"><span>Feeds</span></div>
<div class="t" id="t33" style="top:424.26px;font-size:22.97px;color:#333;letter-spacing:-0.544px;-webkit-text-stroke:0.46px #333;left:927.20px;"><span>Profile</span></div>
<div class="t" id="t34" style="top:424.26px;font-size:22.97px;color:#333;letter-spacing:-0.426px;-webkit-text-stroke:0.46px #333;left:1038.30px;"><span>Approvals</span></div>
<div class="t" id="t35" style="top:424.26px;font-size:22.97px;color:#333;letter-spacing:-1.119px;-webkit-text-stroke:0.46px #333;left:1185.70px;"><span>Leave</span></div>
<div class="t" id="t36" style="top:424.26px;font-size:22.97px;color:#333;letter-spacing:-0.172px;-webkit-text-stroke:0.46px #333;left:1292.50px;"><span>Attendance</span></div>
<div class="t" id="t37" style="top:424.26px;font-size:22.97px;color:#333;letter-spacing:-0.668px;-webkit-text-stroke:0.46px #333;left:1456.80px;"><span>Timesheets</span></div>
<div class="t" id="t38" style="top:424.26px;font-size:22.97px;color:#333;letter-spacing:-0.788px;-webkit-text-stroke:0.46px #333;left:1618.00px;"><span>Time Logs</span></div>
<div class="t" id="t39" style="top:424.26px;font-size:22.97px;color:#333;letter-spacing:-1.231px;-webkit-text-stroke:0.46px #333;left:1767.00px;"><span>Jobs</span></div>
<div class="t" id="t40" style="top:529.11px;font-size:23.26px;color:#222;letter-spacing:0.486px;-webkit-text-stroke:0.79px #222;left:760.50px;"><span>Check-in reminder</span></div>
<div class="t" id="t41" style="top:566.54px;font-size:21.80px;color:#666;letter-spacing:-0.100px;-webkit-text-stroke:0.44px #666;left:760.50px;"><span>Your shift has already started</span></div>
<div class="t" id="t42" style="top:529.11px;font-size:23.26px;color:#222;letter-spacing:-0.845px;-webkit-text-stroke:0.79px #222;left:1517.00px;"><span>General</span></div>
<div class="t" id="t43" style="top:566.04px;font-size:21.80px;color:#666;letter-spacing:0.539px;-webkit-text-stroke:0.44px #666;left:1517.00px;"><span>9:00 AM-6:00 PM</span></div>
<div class="t" id="t44" style="top:672.81px;font-size:23.26px;color:#222;letter-spacing:0.288px;-webkit-text-stroke:0.79px #222;left:760.50px;"><span>Work Schedule</span></div>
<div class="t" id="t45" style="top:710.34px;font-size:21.80px;color:#666;letter-spacing:-0.315px;-webkit-text-stroke:0.44px #666;left:760.50px;"><span>05-May-2024 &nbsp; - &nbsp; 11-May-2024</span></div>
<div class="t" id="t46" style="top:771.39px;font-size:19.62px;color:#333;letter-spacing:-0.368px;-webkit-text-stroke:0.67px #333;left:780.00px;"><span>Half day shift</span></div>
<div class="t" id="t47" style="top:796.85px;font-size:16.72px;color:#666;letter-spacing:0.215px;-webkit-text-stroke:0.33px #666;left:780.00px;"><span>9:00 AM - 1:00 PM</span></div>
<div class="t" id="t48" style="top:771.39px;font-size:19.62px;color:#333;letter-spacing:-0.666px;-webkit-text-stroke:0.67px #333;left:968.20px;"><span>General</span></div>
<div class="t" id="t49" style="top:796.85px;font-size:16.72px;color:#666;letter-spacing:0.427px;-webkit-text-stroke:0.33px #666;left:968.20px;"><span>9:00 AM - 6:00 PM</span></div>
<div class="t" id="t50" style="top:881.10px;font-size:20.20px;color:#666;letter-spacing:0.056px;-webkit-text-stroke:0.40px #666;left:250.50px;width:1200px;text-align:center;"><span>Sun &nbsp;<b style="color:#222">05</b></span></div>
<div class="t" id="t51" style="top:911.41px;font-size:20.78px;color:#ef9f2f;letter-spacing:-0.437px;-webkit-text-stroke:0.42px #ef9f2f;left:250.50px;width:1200px;text-align:center;"><span>Weekend</span></div>
<div class="t" id="t52" style="top:881.10px;font-size:20.20px;color:#666;letter-spacing:0.435px;-webkit-text-stroke:0.40px #666;left:432.50px;width:1200px;text-align:center;"><span>Mon &nbsp;<b style="color:#222">06</b></span></div>
<div class="t" id="t53" style="top:911.41px;font-size:20.78px;color:#e5484d;letter-spacing:-0.142px;-webkit-text-stroke:0.42px #e5484d;left:432.50px;width:1200px;text-align:center;"><span>Absent</span></div>
<div class="t" id="t54" style="top:881.10px;font-size:20.20px;color:#666;letter-spacing:-0.391px;-webkit-text-stroke:0.40px #666;left:614.50px;width:1200px;text-align:center;"><span>Tue &nbsp;<b style="color:#222">07</b></span></div>
<div class="t" id="t55" style="top:911.41px;font-size:20.78px;color:#1fae5b;letter-spacing:-0.479px;-webkit-text-stroke:0.42px #1fae5b;left:614.50px;width:1200px;text-align:center;"><span>Remote In</span></div>
<div class="t" id="t56" style="top:881.10px;font-size:20.20px;color:#666;letter-spacing:0.310px;-webkit-text-stroke:0.40px #666;left:796.50px;width:1200px;text-align:center;"><span>Wed &nbsp;<b style="color:#222">08</b></span></div>
<div class="t" id="t57" style="top:911.41px;font-size:20.78px;color:#e5484d;letter-spacing:-0.142px;-webkit-text-stroke:0.42px #e5484d;left:796.50px;width:1200px;text-align:center;"><span>Absent</span></div>
<div class="t" id="t58" style="top:881.10px;font-size:20.20px;color:#666;letter-spacing:0.219px;-webkit-text-stroke:0.40px #666;left:978.50px;width:1200px;text-align:center;"><span>Thu &nbsp;<b style="color:#222">09</b></span></div>
<div class="t" id="t59" style="top:911.41px;font-size:20.78px;color:#1fae5b;letter-spacing:-0.479px;-webkit-text-stroke:0.42px #1fae5b;left:978.50px;width:1200px;text-align:center;"><span>Remote In</span></div>
<div class="t" id="t60" style="top:881.10px;font-size:20.20px;color:#666;letter-spacing:0.151px;-webkit-text-stroke:0.40px #666;left:1727.00px;"><span>Fri</span></div>
<div class="t" id="t61" style="top:881.10px;font-size:20.20px;color:#666;letter-spacing:-1.071px;-webkit-text-stroke:0.40px #666;left:1341.80px;width:1200px;text-align:center;"><span>Sat &nbsp;<b style="color:#222">11</b></span></div>
<div class="t" id="t62" style="top:911.41px;font-size:20.78px;color:#ef9f2f;letter-spacing:-0.437px;-webkit-text-stroke:0.42px #ef9f2f;left:1341.80px;width:1200px;text-align:center;"><span>Weekend</span></div>
<div class="t" id="t63" style="top:942.21px;font-size:20.78px;color:#222;letter-spacing:-1.025px;-webkit-text-stroke:0.42px #222;left:614.50px;width:1200px;text-align:center;"><span>13:19 Hrs</span></div>
<div class="t" id="t64" style="top:914.41px;font-size:20.78px;color:#222;letter-spacing:-0.670px;-webkit-text-stroke:0.42px #222;left:1160.00px;width:1200px;text-align:center;"><span>23:18 Hrs</span></div>
<div class="t" id="t65" style="top:1046.11px;font-size:23.26px;color:#1c7fe6;letter-spacing:0.209px;-webkit-text-stroke:0.79px #1c7fe6;left:761.00px;"><span>Team Availability</span></div>
<div class="t" id="t66" style="top:1046.23px;font-size:22.53px;color:#1c7fe6;letter-spacing:-0.398px;-webkit-text-stroke:0.45px #1c7fe6;left:1494.00px;width:1200px;text-align:center;"><span>View all</span></div>
<div class="t" id="t67" style="top:1113.11px;font-size:20.78px;color:#666;letter-spacing:-0.084px;-webkit-text-stroke:0.42px #666;left:790.20px;"><span>Remote In <b style="color:#222">1</b></span></div>
<div class="t" id="t68" style="top:1113.11px;font-size:20.78px;color:#666;letter-spacing:0.202px;-webkit-text-stroke:0.42px #666;left:977.00px;"><span>Present (by default) <b style="color:#222">1</b></span></div>
<div class="t" id="t69" style="top:1113.11px;font-size:20.78px;color:#666;letter-spacing:0.543px;-webkit-text-stroke:0.42px #666;left:1253.00px;"><span>Yet to check-in <b style="color:#222">4</b></span></div>
<div class="t" id="t70" style="top:1113.11px;font-size:20.78px;color:#666;letter-spacing:-0.417px;-webkit-text-stroke:0.42px #666;left:1488.50px;"><span>Leave <b style="color:#222">1</b></span></div>
<div class="t" id="t71" style="top:1230.31px;font-size:23.26px;color:#222;letter-spacing:0.482px;-webkit-text-stroke:0.79px #222;left:760.50px;"><span>Upcoming Holidays</span></div>
<div class="t" id="t72" style="top:1301.54px;font-size:21.80px;color:#222;letter-spacing:0.166px;-webkit-text-stroke:0.74px #222;left:789.40px;"><span>Christmas</span></div>
<div class="t" id="t73" style="top:1330.91px;font-size:20.78px;color:#666;letter-spacing:-0.542px;-webkit-text-stroke:0.42px #666;left:789.40px;"><span>25 - Dec, Wednesday</span></div>
<div class="t" id="t74" style="top:1316.04px;font-size:21.80px;color:#1c7fe6;letter-spacing:-0.190px;-webkit-text-stroke:0.44px #1c7fe6;left:1023.80px;"><span>View all</span></div>
<div class="t" id="t75" style="top:262.93px;font-size:22.53px;color:#444;letter-spacing:-0.408px;-webkit-text-stroke:0.45px #444;left:1944.00px;"><span>Access my payroll</span></div>
<div class="t" style="left:1761px;width:31.5px;text-align:center;top:879.5px;font-size:20.2px;color:#fff;-webkit-text-stroke:0.6px #fff;">10</div>
<div class="t" style="left:2085.5px;width:26.5px;text-align:center;top:99px;font-size:18px;color:#fff;">6</div>
<div style="position:absolute;left:123px;top:1336px;width:2129px;height:9px;background:linear-gradient(rgba(0,0,0,0),rgba(0,0,30,0.07));"></div>
<div style="position:absolute;left:0px;top:1345px;width:2272px;height:39px;background:#fff;"></div>
<svg style="position:absolute;left:0px;top:0px;" width="12" height="12" viewBox="0 0 12 12"><path d="M0 0 H12 Q4 4 0 12 Z" fill="#000"/></svg>
<svg style="position:absolute;left:2260px;top:0px;transform:scaleX(-1);" width="12" height="12" viewBox="0 0 12 12"><path d="M0 0 H12 Q4 4 0 12 Z" fill="#000"/></svg>
<svg style="position:absolute;left:0px;top:1372px;transform:scaleY(-1);" width="12" height="12" viewBox="0 0 12 12"><path d="M0 0 H12 Q4 4 0 12 Z" fill="#000"/></svg>
<svg style="position:absolute;left:2260px;top:1372px;transform:scale(-1,-1);" width="12" height="12" viewBox="0 0 12 12"><path d="M0 0 H12 Q4 4 0 12 Z" fill="#000"/></svg>
<div style="position:absolute;left:20px;top:1345px;width:125px;height:6px;background:#fde3a4;"></div>
</div></body></html>
